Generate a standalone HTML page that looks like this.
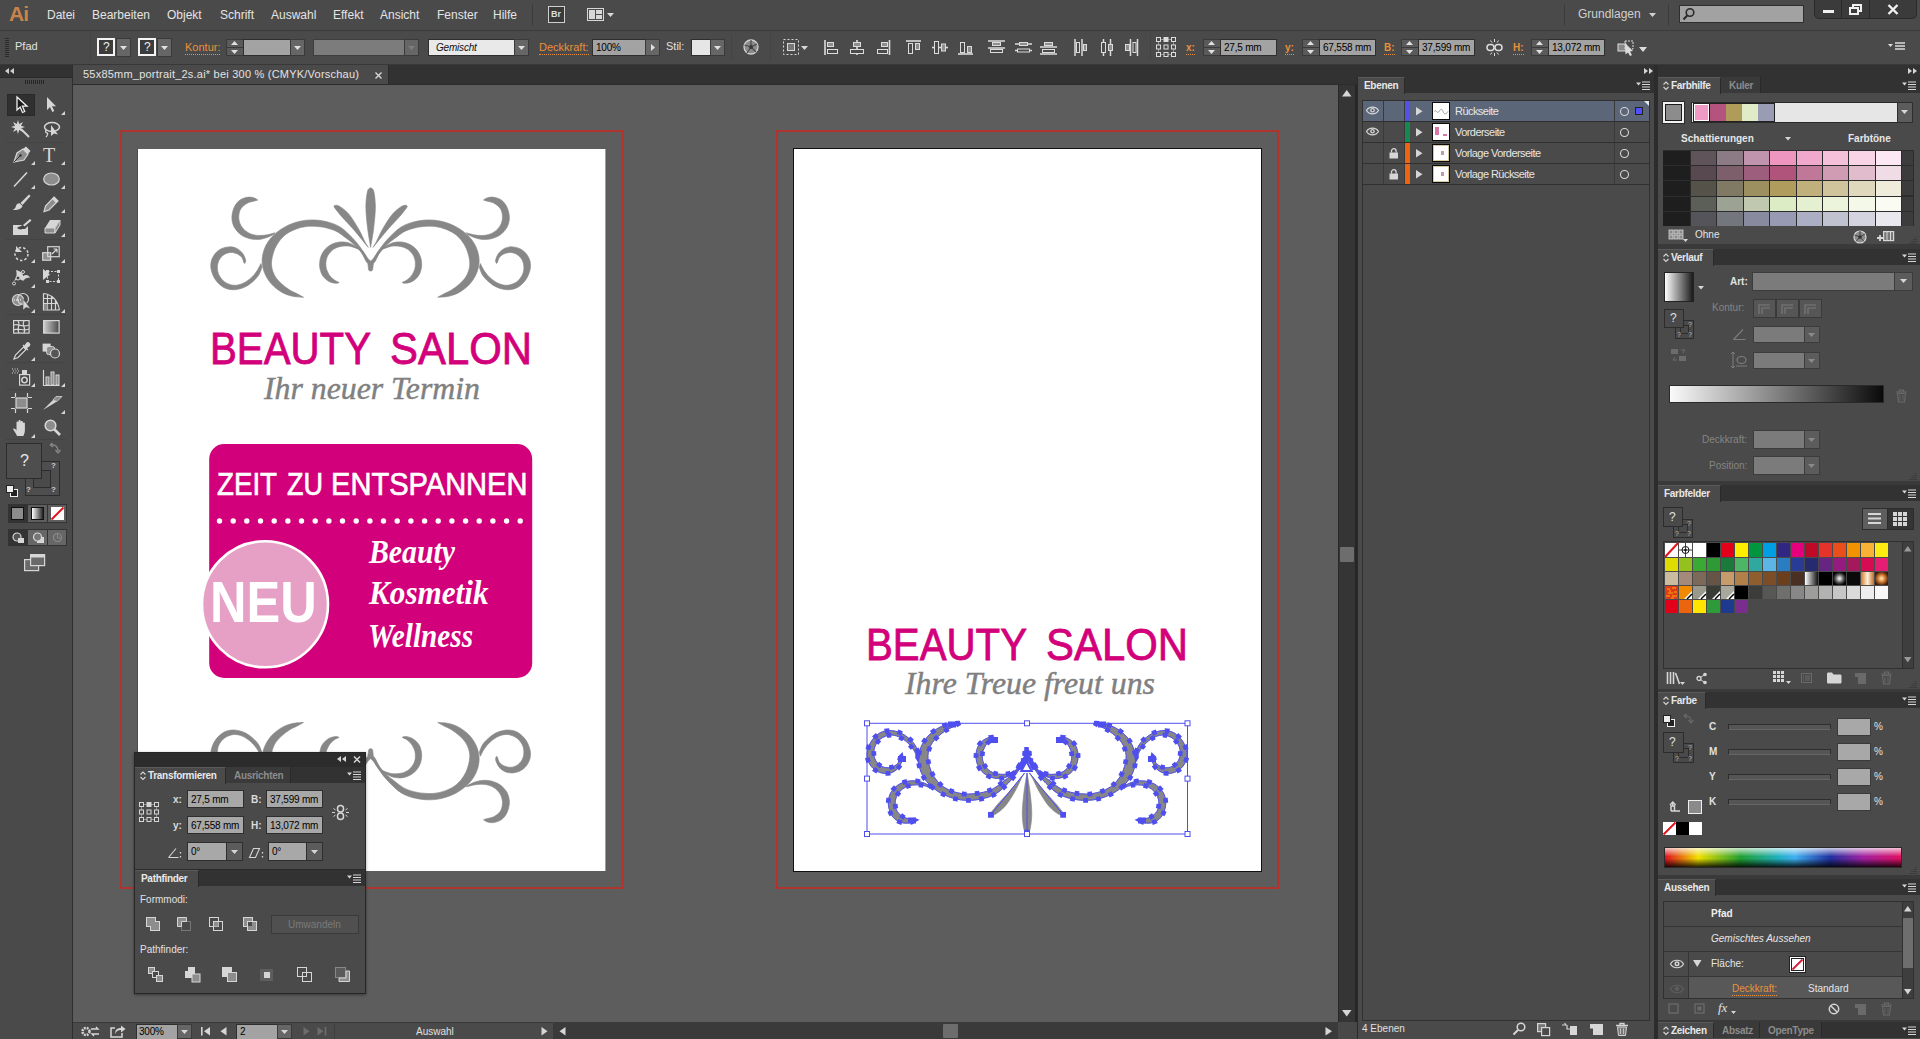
<!DOCTYPE html>
<html lang="de">
<head>
<meta charset="utf-8">
<title>55x85mm_portrait_2s.ai</title>
<style>
*{box-sizing:border-box;margin:0;padding:0}
html,body{width:1920px;height:1039px;overflow:hidden;background:#4a4a4a;}
body{position:relative;font-family:"Liberation Sans","DejaVu Sans",sans-serif;font-size:11px;color:#e6e6e6;line-height:1}
.a{position:absolute}
.t{position:absolute;white-space:nowrap;line-height:1}
svg{position:absolute;overflow:visible}
/* ---------- top bars ---------- */
#menubar{left:0;top:0;width:1920px;height:30px;background:#4a4a4a}
#ctrlbar{left:0;top:30px;width:1920px;height:35px;background:#4a4a4a;border-top:1px solid #3b3b3b;border-bottom:1px solid #383838}
#menubar .m{top:9px;font-size:12px;color:#e4e4e4}
.orange{color:#e8903a}
.dotted{border-bottom:1px dotted #e8903a;padding-bottom:1px}
.field{position:absolute;background:#a9a9a9;border:1px solid #2e2e2e;color:#000;font-size:10px;letter-spacing:-0.2px;padding:3px 0 0 3px;height:16px;white-space:nowrap;overflow:hidden}
.fielddk{position:absolute;background:#7b7b7b;border:1px solid #3a3a3a;height:16px}
.btn{position:absolute;background:#666;border:1px solid #3a3a3a}
/* ---------- canvas ---------- */
#tabbar{left:73px;top:65px;width:1284px;height:20px;background:#323232}
#tab{left:0;top:0;width:316px;height:20px;background:#4a4a4a;border-right:1px solid #2c2c2c}
#canvas{left:73px;top:85px;width:1265px;height:937px;background:#5d5d5d;overflow:hidden}
#vscroll{left:1338px;top:85px;width:19px;height:937px;background:#353535;border-left:1px solid #282828;border-right:2px solid #262626}
#status{left:73px;top:1022px;width:1284px;height:17px;background:#484848}
/* ---------- tools ---------- */
#tools{left:0;top:65px;width:72px;height:974px;background:#4a4a4a}
#toolshead{left:0;top:65px;width:72px;height:12px;background:#323232}
/* ---------- panels ---------- */
.dockhead{background:#373737}
.ptabbar{background:#3a3a3a}
.ptab{position:absolute;background:#4a4a4a;font-weight:bold;font-size:10px;color:#e8e8e8}
.ptab2{position:absolute;font-weight:bold;font-size:10px;color:#8f8f8f}
.panel{background:#4a4a4a}
</style>
</head>
<body>
<!-- ======= MENU BAR ======= -->
<div id="menubar" class="a">
<div class="t" style="left:9px;top:3px;font-size:21px;font-weight:bold;color:#c8834a;letter-spacing:-1px">Ai</div>
<div class="t m" style="left:47px">Datei</div>
<div class="t m" style="left:92px">Bearbeiten</div>
<div class="t m" style="left:167px">Objekt</div>
<div class="t m" style="left:220px">Schrift</div>
<div class="t m" style="left:271px">Auswahl</div>
<div class="t m" style="left:333px">Effekt</div>
<div class="t m" style="left:380px">Ansicht</div>
<div class="t m" style="left:437px">Fenster</div>
<div class="t m" style="left:493px">Hilfe</div>
<div class="a" style="left:532px;top:4px;width:1px;height:22px;background:#3c3c3c"></div>
<div class="a" style="left:548px;top:6px;width:17px;height:17px;border:1px solid #d0d0d0;background:#3a3a3a"></div><div class="t" style="left:551px;top:10px;font-size:9px;font-weight:bold;color:#ddd">Br</div>
<svg style="left:587px;top:8px" width="30" height="14"><rect x="0.5" y="0.5" width="16" height="12" fill="#4a4a4a" stroke="#d8d8d8"/><rect x="2" y="2" width="6" height="9" fill="#d8d8d8"/><rect x="9" y="2" width="6" height="4" fill="#d8d8d8"/><rect x="9" y="7" width="6" height="4" fill="#d8d8d8"/><path d="M20 5h7l-3.5 4z" fill="#d8d8d8"/></svg>
<div class="a" style="left:1564px;top:4px;width:1px;height:22px;background:#3c3c3c"></div>
<div class="t" style="left:1578px;top:8px;font-size:12px;color:#d0d0d0">Grundlagen</div>
<svg style="left:1649px;top:13px" width="8" height="5"><path d="M0 0h7l-3.5 4z" fill="#d0d0d0"/></svg>
<div class="a" style="left:1668px;top:4px;width:1px;height:22px;background:#3c3c3c"></div>
<div class="a" style="left:1679px;top:5px;width:125px;height:18px;background:#a2a2a2;border:1px solid #2e2e2e"></div>
<svg style="left:1682px;top:7px" width="14" height="14"><circle cx="8" cy="5.5" r="3.8" fill="none" stroke="#2a2a2a" stroke-width="1.6"/><path d="M5.2 8.5L1.5 12.5" stroke="#2a2a2a" stroke-width="2"/></svg>
<div class="a" style="left:1814px;top:0;width:103px;height:19px;background:#3b3b3b;border-radius:0 0 5px 5px;border:1px solid #2a2a2a;border-top:none"></div>
<div class="a" style="left:1841px;top:0;width:1px;height:18px;background:#2a2a2a"></div><div class="a" style="left:1869px;top:0;width:1px;height:18px;background:#2a2a2a"></div>
<div class="a" style="left:1823px;top:10px;width:11px;height:3px;background:#f0f0f0"></div>
<svg style="left:1849px;top:4px" width="14" height="12"><rect x="4" y="1" width="8" height="6" fill="none" stroke="#f0f0f0" stroke-width="2"/><rect x="1" y="4" width="8" height="6" fill="#3b3b3b" stroke="#f0f0f0" stroke-width="2"/></svg>
<svg style="left:1887px;top:4px" width="12" height="11"><path d="M1.5 1l9 9M10.5 1l-9 9" stroke="#f0f0f0" stroke-width="2.4"/></svg>
</div>
<!-- ======= CONTROL BAR ======= -->
<div id="ctrlbar" class="a">
<div class="a" style="left:5px;top:7px;width:4px;height:20px;background:repeating-linear-gradient(#2a2a2a 0 1px,transparent 1px 2px)"></div>
<div class="t" style="left:15px;top:10px;font-size:11px;color:#e0e0e0">Pfad</div>
<div class="a" style="left:90px;top:3px;width:1px;height:26px;background:#444"></div>
<div class="a" style="left:97px;top:7px;width:18px;height:18px;border:2px solid #f4f4f4;background:#3c3c3c"></div><div class="t" style="left:103px;top:10px;font-size:12px;color:#eee">?</div><div class="btn" style="left:116px;top:7px;width:15px;height:19px"></div><svg style="left:120px;top:15px" width="8" height="5"><path d="M0 0h7l-3.5 4z" fill="#e0e0e0"/></svg>
<div class="a" style="left:138px;top:7px;width:18px;height:18px;border:2px solid #f4f4f4;background:#3c3c3c"></div><div class="t" style="left:144px;top:10px;font-size:12px;color:#eee">?</div><div class="btn" style="left:157px;top:7px;width:15px;height:19px"></div><svg style="left:161px;top:15px" width="8" height="5"><path d="M0 0h7l-3.5 4z" fill="#e0e0e0"/></svg>
<div class="t orange" style="left:185px;top:11px;font-size:11px"><span class="dotted">Kontur:</span></div>
<div class="btn" style="left:226px;top:8px;width:18px;height:17px;background:#5a5a5a"></div><div class="a" style="left:227px;top:16px;width:16px;height:1px;background:#3a3a3a"></div><svg style="left:231px;top:10px" width="8" height="14"><path d="M0 4h7l-3.5-4z M0 9h7l-3.5 4z" fill="#e0e0e0"/></svg><div class="field" style="left:243px;top:8px;width:48px;height:17px;background:#a3a3a3"></div><div class="btn" style="left:290px;top:8px;width:15px;height:17px"></div><svg style="left:294px;top:15px" width="8" height="5"><path d="M0 0h7l-3.5 4z" fill="#e0e0e0"/></svg>
<div class="field" style="left:313px;top:8px;width:92px;height:17px;background:#7c7c7c;border-color:#3e3e3e"></div><div class="btn" style="left:404px;top:8px;width:15px;height:17px"></div><svg style="left:408px;top:15px" width="8" height="5"><path d="M0 0h7l-3.5 4z" fill="#7d7d7d"/></svg>
<div class="field" style="left:428px;top:8px;width:87px;height:17px;background:#e9e9e9;font-style:italic;color:#111;padding:3px 0 0 7px">Gemischt</div><div class="btn" style="left:514px;top:8px;width:15px;height:17px"></div><svg style="left:518px;top:15px" width="8" height="5"><path d="M0 0h7l-3.5 4z" fill="#e0e0e0"/></svg>
<div class="t orange" style="left:539px;top:11px;font-size:11px"><span class="dotted">Deckkraft:</span></div>
<div class="field" style="left:592px;top:8px;width:54px;height:17px;background:#a3a3a3">100%</div><div class="btn" style="left:645px;top:8px;width:15px;height:17px"></div><svg style="left:651px;top:13px" width="5" height="8"><path d="M0 0v7l4-3.500z" fill="#e0e0e0"/></svg>
<div class="t" style="left:666px;top:10px;font-size:11px;color:#e0e0e0">Stil:</div>
<div class="field" style="left:691px;top:8px;width:20px;height:17px;background:#e6e6e6"></div><div class="btn" style="left:710px;top:8px;width:15px;height:17px"></div><svg style="left:714px;top:15px" width="8" height="5"><path d="M0 0h7l-3.5 4z" fill="#e0e0e0"/></svg>
<div class="a" style="left:731px;top:3px;width:1px;height:26px;background:#444"></div>
<svg style="left:743px;top:8px" width="17" height="17"><circle cx="8" cy="8" r="7" fill="#8a8a8a" stroke="#d0d0d0" stroke-width="1.3"/><path d="M8 8L8 1M8 8L14 5M8 8L13 13M8 8L4 14M8 8L1.500 6" stroke="#4a4a4a" stroke-width="1.2"/><circle cx="8" cy="8" r="2" fill="#3a3a3a"/></svg>
<div class="a" style="left:770px;top:3px;width:1px;height:26px;background:#444"></div>
<svg style="left:782px;top:7px" width="28" height="20"><rect x="1.5" y="1.5" width="15" height="15" fill="none" stroke="#d8d8d8" stroke-dasharray="2 2"/><rect x="5.500" y="5.500" width="7" height="7" fill="#777" stroke="#d8d8d8"/><path d="M19 8h7l-3.500 4z" fill="#d8d8d8"/></svg>
<svg style="left:824px;top:9px" width="15" height="15"><path d="M1 0v15" stroke="#dcdcdc" stroke-width="1.6"/><rect x="3.500" y="2.500" width="6" height="4" fill="#8d8d8d" stroke="#dcdcdc"/><rect x="3.500" y="9.500" width="10" height="4" fill="none" stroke="#dcdcdc"/></svg>
<svg style="left:850px;top:9px" width="15" height="15"><path d="M7 0v15" stroke="#dcdcdc" stroke-width="1.6"/><rect x="3.500" y="2.500" width="7" height="4" fill="#8d8d8d" stroke="#dcdcdc"/><rect x="0.500" y="9.500" width="13" height="4" fill="#4a4a4a" stroke="#dcdcdc"/></svg>
<svg style="left:876px;top:9px" width="15" height="15"><path d="M13.500 0v15" stroke="#dcdcdc" stroke-width="1.600"/><rect x="5.500" y="2.500" width="6" height="4" fill="#8d8d8d" stroke="#dcdcdc"/><rect x="1.500" y="9.500" width="10" height="4" fill="none" stroke="#dcdcdc"/></svg>
<svg style="left:906px;top:9px" width="16" height="15"><path d="M0 1h15" stroke="#dcdcdc" stroke-width="1.600"/><rect x="2.500" y="3.500" width="4" height="10" fill="none" stroke="#dcdcdc"/><rect x="9.500" y="3.500" width="4" height="6" fill="#8d8d8d" stroke="#dcdcdc"/></svg>
<svg style="left:932px;top:9px" width="17" height="15"><path d="M0 7.500h16" stroke="#dcdcdc" stroke-width="1.600"/><rect x="2.500" y="1.500" width="4" height="12" fill="#4a4a4a" stroke="#dcdcdc"/><rect x="9.500" y="4" width="4" height="7" fill="#8d8d8d" stroke="#dcdcdc"/></svg>
<svg style="left:958px;top:9px" width="16" height="16"><path d="M0 14h15" stroke="#dcdcdc" stroke-width="1.600"/><rect x="2.500" y="2.500" width="4" height="10" fill="none" stroke="#dcdcdc"/><rect x="9.500" y="6.500" width="4" height="6" fill="#8d8d8d" stroke="#dcdcdc"/></svg>
<svg style="left:988px;top:9px" width="18" height="15"><path d="M0 1h17M0 8h17" stroke="#dcdcdc" stroke-width="1.500"/><rect x="4.500" y="2.500" width="8" height="3" fill="#8d8d8d" stroke="#dcdcdc"/><rect x="2.500" y="9.500" width="12" height="3" fill="none" stroke="#dcdcdc"/></svg>
<svg style="left:1015px;top:9px" width="18" height="15"><path d="M0 4h17M0 10.500h17" stroke="#dcdcdc" stroke-width="1.500"/><rect x="4.500" y="2.500" width="8" height="3" fill="#8d8d8d" stroke="#dcdcdc"/><rect x="2.500" y="9" width="12" height="3" fill="#4a4a4a" stroke="#dcdcdc"/></svg>
<svg style="left:1040px;top:9px" width="18" height="16"><path d="M0 7h17M0 14h17" stroke="#dcdcdc" stroke-width="1.500"/><rect x="4.500" y="2.500" width="8" height="3" fill="#8d8d8d" stroke="#dcdcdc"/><rect x="2.500" y="9.500" width="12" height="3" fill="none" stroke="#dcdcdc"/></svg>
<svg style="left:1074px;top:8px" width="15" height="17"><path d="M1 0v17M8 0v17" stroke="#dcdcdc" stroke-width="1.500"/><rect x="2.500" y="3.500" width="3" height="10" fill="none" stroke="#dcdcdc"/><rect x="9.500" y="5.500" width="3" height="6" fill="#8d8d8d" stroke="#dcdcdc"/></svg>
<svg style="left:1100px;top:8px" width="15" height="17"><path d="M3.500 0v17M10.500 0v17" stroke="#dcdcdc" stroke-width="1.500"/><rect x="1.500" y="3.500" width="4" height="10" fill="#4a4a4a" stroke="#dcdcdc"/><rect x="8.500" y="5.500" width="4" height="6" fill="#8d8d8d" stroke="#dcdcdc"/></svg>
<svg style="left:1124px;top:8px" width="15" height="17"><path d="M6.500 0v17M13.500 0v17" stroke="#dcdcdc" stroke-width="1.500"/><rect x="9" y="3.500" width="3" height="10" fill="none" stroke="#dcdcdc"/><rect x="1.500" y="5.500" width="4" height="6" fill="#8d8d8d" stroke="#dcdcdc"/></svg>
<div class="a" style="left:1150px;top:3px;width:1px;height:26px;background:#444"></div>
<svg style="left:1156px;top:6px" width="21" height="21"><rect x="2.500" y="2.500" width="15" height="15" fill="none" stroke="#dcdcdc" stroke-dasharray="1 1"/><rect x="0.5" y="0.5" width="4" height="4" fill="#4a4a4a" stroke="#dcdcdc"/><rect x="0.5" y="8.0" width="4" height="4" fill="#4a4a4a" stroke="#dcdcdc"/><rect x="0.5" y="15.5" width="4" height="4" fill="#4a4a4a" stroke="#dcdcdc"/><rect x="8.0" y="0.5" width="4" height="4" fill="#dcdcdc" stroke="#dcdcdc"/><rect x="8.0" y="8.0" width="4" height="4" fill="#4a4a4a" stroke="#dcdcdc"/><rect x="8.0" y="15.5" width="4" height="4" fill="#4a4a4a" stroke="#dcdcdc"/><rect x="15.5" y="0.5" width="4" height="4" fill="#4a4a4a" stroke="#dcdcdc"/><rect x="15.5" y="8.0" width="4" height="4" fill="#4a4a4a" stroke="#dcdcdc"/><rect x="15.5" y="15.5" width="4" height="4" fill="#4a4a4a" stroke="#dcdcdc"/></svg>
<div class="t orange" style="left:1186px;top:12px;font-size:10px;font-weight:bold"><span class="dotted">x:</span></div>
<div class="btn" style="left:1203px;top:8px;width:18px;height:17px;background:#5a5a5a"></div><div class="a" style="left:1204px;top:16px;width:16px;height:1px;background:#3a3a3a"></div><svg style="left:1208px;top:10px" width="8" height="14"><path d="M0 4h7l-3.5-4z M0 9h7l-3.5 4z" fill="#e0e0e0"/></svg><div class="field" style="left:1220px;top:8px;width:57px;height:17px;background:#a3a3a3">27,5 mm</div>
<div class="t orange" style="left:1285px;top:12px;font-size:10px;font-weight:bold"><span class="dotted">y:</span></div>
<div class="btn" style="left:1302px;top:8px;width:18px;height:17px;background:#5a5a5a"></div><div class="a" style="left:1303px;top:16px;width:16px;height:1px;background:#3a3a3a"></div><svg style="left:1307px;top:10px" width="8" height="14"><path d="M0 4h7l-3.5-4z M0 9h7l-3.5 4z" fill="#e0e0e0"/></svg><div class="field" style="left:1319px;top:8px;width:57px;height:17px;background:#a3a3a3">67,558 mm</div>
<div class="t orange" style="left:1384px;top:12px;font-size:10px;font-weight:bold"><span class="dotted">B:</span></div>
<div class="btn" style="left:1401px;top:8px;width:18px;height:17px;background:#5a5a5a"></div><div class="a" style="left:1402px;top:16px;width:16px;height:1px;background:#3a3a3a"></div><svg style="left:1406px;top:10px" width="8" height="14"><path d="M0 4h7l-3.5-4z M0 9h7l-3.5 4z" fill="#e0e0e0"/></svg><div class="field" style="left:1418px;top:8px;width:57px;height:17px;background:#a3a3a3">37,599 mm</div>
<svg style="left:1486px;top:8px" width="17" height="17"><rect x="1" y="5.500" width="7" height="6" rx="3" fill="none" stroke="#dcdcdc" stroke-width="1.500"/><rect x="9" y="5.500" width="7" height="6" rx="3" fill="none" stroke="#dcdcdc" stroke-width="1.500"/><path d="M8.500 0v3M8.500 14v3M4.500 1.500l1.500 2M12.500 1.500l-1.500 2M4.500 15.500l1.500-2M12.500 15.500l-1.500-2" stroke="#dcdcdc"/></svg>
<div class="t orange" style="left:1513px;top:12px;font-size:10px;font-weight:bold"><span class="dotted">H:</span></div>
<div class="btn" style="left:1531px;top:8px;width:18px;height:17px;background:#5a5a5a"></div><div class="a" style="left:1532px;top:16px;width:16px;height:1px;background:#3a3a3a"></div><svg style="left:1536px;top:10px" width="8" height="14"><path d="M0 4h7l-3.5-4z M0 9h7l-3.5 4z" fill="#e0e0e0"/></svg><div class="field" style="left:1548px;top:8px;width:57px;height:17px;background:#a3a3a3">13,072 mm</div>
<svg style="left:1617px;top:9px" width="32" height="16"><rect x="1" y="4" width="8" height="7" fill="#888" stroke="#dcdcdc"/><rect x="8" y="1" width="8" height="8" fill="none" stroke="#dcdcdc" stroke-dasharray="2 1"/><path d="M8 3l8 8-3 .5 2 3.500-2 1-2-3.500-2.500 2z" fill="#dcdcdc"/><path d="M22 7h8l-4 5z" fill="#dcdcdc"/></svg>
<svg style="left:1888px;top:11px" width="18" height="10"><path d="M0 2h5l-2.500 3z" fill="#dcdcdc"/><path d="M7 1h10M7 4h10M7 7h10" stroke="#dcdcdc" stroke-width="1.300"/></svg>
</div>
<!-- ======= TOOLS ======= -->
<div id="tools" class="a"></div>
<div id="toolshead" class="a"></div>
<!--TOOLS-->
<svg style="left:5px;top:68px" width="10" height="7"><path d="M4 0v6L0 3zM9 0v6L5 3z" fill="#d0d0d0"/></svg>
<div class="a" style="left:0;top:77px;width:72px;height:1px;background:#2a2a2a"></div><div class="a" style="left:72px;top:65px;width:1px;height:974px;background:#2e2e2e"></div><div class="a" style="left:25px;top:80px;width:20px;height:4px;background:repeating-linear-gradient(90deg,#262626 0 1px,transparent 1px 2px)"></div>
<div class="a" style="left:7px;top:94px;width:28px;height:22px;background:#303030;border:1px solid #2a2a2a"></div>
<svg style="left:16px;top:96px" width="13" height="18"><path d="M1 1v13l3.200-3 2.300 5.500 2.200-1-2.300-5.300H11z" fill="#1a1a1a" stroke="#f0f0f0" stroke-width="1.300"/></svg>
<svg style="left:46px;top:97px" width="12" height="16"><path d="M1 0v13l3-3 2.300 5 2-1-2.300-4.800H10z" fill="#d6d6d6"/></svg>
<svg style="left:61px;top:111px" width="4" height="4"><path d="M4 0v4H0z" fill="#d6d6d6"/></svg><svg style="left:12px;top:120px" width="18" height="18"><path d="M9 9l8 8" stroke="#d6d6d6" stroke-width="2"/><path d="M6 0l1.200 4 3.800-2-2 3.800 4 1.200-4 1.200 2 3.800-3.800-2L6 14 4.800 10 1 12l2-3.800L-1 7l4-1.200L1 2l3.800 2z" fill="#d6d6d6"/></svg>
<svg style="left:43px;top:121px" width="18" height="17"><ellipse cx="9" cy="6" rx="7.500" ry="4.500" fill="none" stroke="#d6d6d6" stroke-width="1.500"/><path d="M3 9c-1 2 0 3 1 3s1 2-1 4" fill="none" stroke="#d6d6d6" stroke-width="1.300"/><path d="M8 4v11l3-2.500 4 1z" fill="#d6d6d6"/></svg>
<div class="a" style="left:6px;top:142px;width:60px;height:1px;background:#444"></div>
<svg style="left:13px;top:146px" width="18" height="17"><path d="M1 16L4 7l6-4 5 5-4 6z" fill="#8d8d8d" stroke="#d6d6d6" stroke-width="1.200"/><path d="M10 3l3-2.500 4.500 4.500L15 8z" fill="#d6d6d6"/><path d="M1 16l6-6" stroke="#333" stroke-width="1"/><circle cx="7.500" cy="9.500" r="1.300" fill="#333"/></svg>
<svg style="left:31px;top:161px" width="4" height="4"><path d="M4 0v4H0z" fill="#d6d6d6"/></svg><div class="t" style="left:43px;top:145px;font-family:'Liberation Serif',serif;font-size:20px;color:#d6d6d6">T</div><svg style="left:61px;top:161px" width="4" height="4"><path d="M4 0v4H0z" fill="#d6d6d6"/></svg><svg style="left:14px;top:172px" width="14" height="15"><path d="M0 14.500L13 0.500" stroke="#d6d6d6" stroke-width="1.500"/></svg>
<svg style="left:31px;top:185px" width="4" height="4"><path d="M4 0v4H0z" fill="#d6d6d6"/></svg><svg style="left:43px;top:172px" width="17" height="14"><ellipse cx="8.500" cy="7" rx="7.800" ry="6" fill="#8d8d8d" stroke="#d6d6d6" stroke-width="1.200"/></svg>
<svg style="left:61px;top:185px" width="4" height="4"><path d="M4 0v4H0z" fill="#d6d6d6"/></svg><svg style="left:12px;top:194px" width="19" height="17"><path d="M17 0.500l1.500 1.500-8 9-2-2z" fill="#d6d6d6"/><path d="M8 9.500l2.500 2.500c-1 3-5 4.500-10 4 2-1 3-2 3.500-4 .5-2 2.500-3 4-2.500z" fill="#d6d6d6"/></svg>
<svg style="left:43px;top:196px" width="16" height="16"><path d="M11 1l4 4-9 9-5 1.500L2.500 10z" fill="#8d8d8d" stroke="#d6d6d6" stroke-width="1.200"/><path d="M11 1l4 4-2 2-4-4z" fill="#d6d6d6"/></svg>
<svg style="left:61px;top:209px" width="4" height="4"><path d="M4 0v4H0z" fill="#d6d6d6"/></svg><svg style="left:13px;top:219px" width="19" height="17"><path d="M0 6h9l-3 4h6l3-3v9H0z" fill="#d6d6d6"/><path d="M17 0l1.500 1.500-7 6-1.500-1.500z" fill="#d6d6d6"/><path d="M4 9c2-2 6-3 8-1-2 3-6 3-8 1z" fill="#444"/></svg>
<svg style="left:44px;top:219px" width="17" height="15"><path d="M6 1h10l-5 8H1z" fill="#d6d6d6"/><path d="M1 9h10v5H1z" fill="#8d8d8d" stroke="#d6d6d6" stroke-width="1"/><path d="M11 9l5-8v5l-5 8z" fill="#8d8d8d" stroke="#d6d6d6" stroke-width="1"/></svg>
<svg style="left:61px;top:233px" width="4" height="4"><path d="M4 0v4H0z" fill="#d6d6d6"/></svg><div class="a" style="left:6px;top:239px;width:60px;height:1px;background:#444"></div>
<svg style="left:13px;top:245px" width="17" height="17"><circle cx="8.500" cy="9" r="6.500" fill="none" stroke="#d6d6d6" stroke-width="1.500" stroke-dasharray="2.500 2"/><path d="M3 1v6h6z" fill="#d6d6d6"/></svg>
<svg style="left:31px;top:259px" width="4" height="4"><path d="M4 0v4H0z" fill="#d6d6d6"/></svg><svg style="left:42px;top:246px" width="18" height="15"><rect x="0.700" y="6.700" width="8" height="7.500" fill="#8d8d8d" stroke="#d6d6d6" stroke-width="1.200"/><rect x="5.700" y="0.700" width="11.500" height="10" fill="none" stroke="#d6d6d6" stroke-width="1.200"/><path d="M10 8l5-5M15 3h-3.500M15 3v3.500" stroke="#d6d6d6" stroke-width="1.200" fill="none"/></svg>
<svg style="left:61px;top:259px" width="4" height="4"><path d="M4 0v4H0z" fill="#d6d6d6"/></svg><svg style="left:12px;top:269px" width="19" height="17"><path d="M4 1c1 4 1 7-2 11 4-2 7-2 9 0 2-3 5-4 7-3-1-3-4-4-7-2 0-3-3-5-7-6z" fill="#d6d6d6"/><circle cx="6" cy="9" r="2" fill="#444" stroke="#d6d6d6"/><circle cx="2" cy="14.500" r="1.500" fill="#444" stroke="#d6d6d6"/><circle cx="11" cy="3" r="1.500" fill="#444" stroke="#d6d6d6"/></svg>
<svg style="left:31px;top:284px" width="4" height="4"><path d="M4 0v4H0z" fill="#d6d6d6"/></svg><svg style="left:43px;top:269px" width="17" height="15"><rect x="4.500" y="2.500" width="11" height="10" fill="none" stroke="#d6d6d6" stroke-dasharray="2 1.500"/><path d="M0 0v11l7-5.500z" fill="#d6d6d6"/><rect x="3" y="1" width="3" height="3" fill="#d6d6d6"/><rect x="14" y="1" width="3" height="3" fill="#d6d6d6"/><rect x="3" y="11" width="3" height="3" fill="#d6d6d6"/><rect x="14" y="11" width="3" height="3" fill="#d6d6d6"/></svg>
<svg style="left:12px;top:293px" width="20" height="19"><circle cx="6" cy="7" r="5.500" fill="#8d8d8d" stroke="#d6d6d6" stroke-width="1.200"/><circle cx="11" cy="6" r="5.500" fill="none" stroke="#d6d6d6" stroke-width="1.200"/><path d="M2 7h8" stroke="#fff" stroke-dasharray="1 1"/><path d="M11 6v11l3-2.500 4.500 1z" fill="#d6d6d6" stroke="#444" stroke-width=".5"/></svg>
<svg style="left:31px;top:309px" width="4" height="4"><path d="M4 0v4H0z" fill="#d6d6d6"/></svg><svg style="left:43px;top:293px" width="17" height="18"><path d="M0.500 0.500v16.500h16M0.500 0.500c9 1 14 6 16 16.500M4.500 1.500v15.500M8.500 3.500v13.500M12.500 7v10M0.500 5.500h10M0.500 10.500h14" fill="none" stroke="#d6d6d6" stroke-width="1.200"/><path d="M1 11h3.500v5.500H1z" fill="#8d8d8d"/></svg>
<svg style="left:61px;top:309px" width="4" height="4"><path d="M4 0v4H0z" fill="#d6d6d6"/></svg><div class="a" style="left:6px;top:314px;width:60px;height:1px;background:#444"></div>
<svg style="left:13px;top:320px" width="17" height="14"><rect x="0.600" y="0.600" width="15.500" height="12.500" fill="none" stroke="#d6d6d6" stroke-width="1.200"/><path d="M1 5c4-2 7 3 15 0M1 10c5-3 8 2 15-1M5 1c3 4-2 8 1 12M11 1c-3 5 3 7 0 12" fill="none" stroke="#d6d6d6" stroke-width="1.200"/></svg>
<svg style="left:43px;top:320px" width="17" height="14"><defs><linearGradient id="tg"><stop offset="0" stop-color="#cfcfcf"/><stop offset="1" stop-color="#4a4a4a"/></linearGradient></defs><rect x="0.600" y="0.600" width="15.500" height="12.500" fill="url(#tg)" stroke="#d6d6d6" stroke-width="1.200"/></svg>
<svg style="left:13px;top:342px" width="18" height="18"><path d="M1 17l1.500-4 8-8 2.500 2.500-8 8z" fill="#444" stroke="#d6d6d6" stroke-width="1.200"/><path d="M10 3l5 5M11 5l3-4c1.500-1 3.500 1 2.500 2.500l-4 3z" fill="#d6d6d6" stroke="#d6d6d6" stroke-width="1.200"/></svg>
<svg style="left:31px;top:357px" width="4" height="4"><path d="M4 0v4H0z" fill="#d6d6d6"/></svg><svg style="left:42px;top:343px" width="19" height="16"><rect x="0.600" y="0.600" width="8" height="8" fill="#d6d6d6"/><rect x="4.600" y="3.600" width="8" height="8" rx="2" fill="#8d8d8d" stroke="#d6d6d6" stroke-width="1"/><circle cx="13" cy="10.500" r="4.500" fill="#555" stroke="#d6d6d6" stroke-width="1.200"/></svg>
<div class="a" style="left:6px;top:362px;width:60px;height:1px;background:#444"></div>
<svg style="left:12px;top:368px" width="19" height="18"><rect x="7.600" y="6.600" width="10" height="10.500" fill="#444" stroke="#d6d6d6" stroke-width="1.200"/><rect x="10" y="2" width="5" height="4" fill="#d6d6d6"/><circle cx="12.500" cy="12" r="2.700" fill="none" stroke="#d6d6d6" stroke-width="1.500"/><path d="M0 1h1M2.500 1h1M5 1h1M1 3h1M3.500 3h1M6 3h1M0 5h1M2.500 5h1M5 5h1" stroke="#d6d6d6" stroke-width="1.200"/></svg>
<svg style="left:31px;top:383px" width="4" height="4"><path d="M4 0v4H0z" fill="#d6d6d6"/></svg><svg style="left:43px;top:370px" width="17" height="16"><path d="M0.500 0v15.500h16" fill="none" stroke="#d6d6d6" stroke-width="1.200"/><rect x="3" y="7" width="3" height="8" fill="#8d8d8d" stroke="#d6d6d6"/><rect x="8" y="2" width="3" height="13" fill="#8d8d8d" stroke="#d6d6d6"/><rect x="13" y="5" width="3" height="10" fill="#8d8d8d" stroke="#d6d6d6"/></svg>
<svg style="left:61px;top:383px" width="4" height="4"><path d="M4 0v4H0z" fill="#d6d6d6"/></svg><div class="a" style="left:6px;top:389px;width:60px;height:1px;background:#444"></div>
<svg style="left:11px;top:393px" width="21" height="20"><rect x="5" y="5" width="11" height="10" fill="#8d8d8d" stroke="#d6d6d6" stroke-width="1.200"/><path d="M4.500 0v4M16.500 0v4M4.500 16v4M16.500 16v4M0 4.500h4M0 15.500h4M17 4.500h4M17 15.500h4" stroke="#d6d6d6" stroke-width="1.200"/></svg>
<svg style="left:43px;top:396px" width="19" height="15"><path d="M0 14L10 4l4 1.500z" fill="#d6d6d6"/><path d="M10 4l3-3.500h6L14 5.500z" fill="#8d8d8d" stroke="#d6d6d6" stroke-width=".8"/></svg>
<svg style="left:61px;top:410px" width="4" height="4"><path d="M4 0v4H0z" fill="#d6d6d6"/></svg><svg style="left:13px;top:419px" width="18" height="18"><path d="M4 17c-1-3-3-5-4-7 1-1 2.500 0 3.500 1.500V3.500c0-1.500 2-1.500 2 0V2c0-1.500 2.200-1.500 2.200 0v1c0-1.500 2.200-1.500 2.200 0v1.500c0-1.300 2-1.300 2 0V11c0 3-1 4-1.500 6z" fill="#d6d6d6"/></svg>
<svg style="left:31px;top:434px" width="4" height="4"><path d="M4 0v4H0z" fill="#d6d6d6"/></svg><svg style="left:44px;top:419px" width="17" height="17"><circle cx="6.500" cy="6.500" r="5.300" fill="#8d8d8d" stroke="#d6d6d6" stroke-width="1.600"/><path d="M10.500 10.500l5.500 5.500" stroke="#d6d6d6" stroke-width="2.600"/></svg>
<div class="a" style="left:6px;top:439px;width:60px;height:1px;background:#444"></div>
<div class="a" style="left:25px;top:461px;width:35px;height:35px;background:#4e4e4e;border:1px solid #2c2c2c"></div><div class="a" style="left:33px;top:470px;width:18px;height:18px;background:#4a4a4a;border:1px solid #2c2c2c"></div><div class="a" style="left:6px;top:443px;width:36px;height:36px;background:#4e4e4e;border:1px solid #2c2c2c"></div><div class="t" style="left:20px;top:453px;font-size:16px;color:#e8e8e8">?</div><div class="t" style="left:51px;top:462px;font-size:8px;font-weight:bold;color:#ccc">?</div><div class="t" style="left:26px;top:486px;font-size:8px;font-weight:bold;color:#ccc">?</div><div class="t" style="left:51px;top:486px;font-size:8px;font-weight:bold;color:#ccc">?</div><svg style="left:49px;top:444px" width="12" height="10"><path d="M1 1c4-1 8 1 8 6M9 9l-2.500-3M9 9l2.500-3M1 1l3 2M1 1l2.500-2" fill="none" stroke="#888" stroke-width="1.300"/></svg>
<svg style="left:6px;top:485px" width="13" height="13"><rect x="4.500" y="4.500" width="7" height="7" fill="#222" stroke="#eee"/><rect x="0.500" y="0.500" width="7" height="7" fill="#eee" stroke="#222"/></svg>
<div class="a" style="left:8px;top:504px;width:59px;height:19px;background:#5e5e5e;border:1px solid #333"></div><div class="a" style="left:8px;top:504px;width:20px;height:19px;background:#333"></div><div class="a" style="left:27px;top:505px;width:1px;height:17px;background:#333"></div><div class="a" style="left:47px;top:505px;width:1px;height:17px;background:#333"></div><div class="a" style="left:11px;top:507px;width:13px;height:13px;background:#8c8c8c;border:1px solid #111"></div><div class="a" style="left:31px;top:507px;width:13px;height:13px;background:linear-gradient(90deg,#fff,#222);border:1px solid #111"></div><svg style="left:51px;top:507px" width="13" height="13"><rect x="0" y="0" width="13" height="13" fill="#fff"/><path d="M0.500 12.500L12.500 0.500" stroke="#e0141e" stroke-width="2"/></svg>
<div class="a" style="left:8px;top:529px;width:59px;height:17px;background:#666;border:1px solid #333"></div><div class="a" style="left:8px;top:529px;width:20px;height:17px;background:#333"></div><div class="a" style="left:27px;top:530px;width:1px;height:15px;background:#333"></div><div class="a" style="left:47px;top:530px;width:1px;height:15px;background:#333"></div><svg style="left:12px;top:532px" width="13" height="12"><circle cx="5" cy="5" r="4" fill="#555" stroke="#d6d6d6" stroke-width="1.200"/><rect x="6" y="6" width="6" height="5" fill="#d6d6d6"/></svg>
<svg style="left:32px;top:532px" width="13" height="12"><rect x="5" y="5" width="7" height="6" fill="#d6d6d6"/><circle cx="5.500" cy="5" r="4" fill="#777" stroke="#d6d6d6" stroke-width="1.200"/></svg>
<svg style="left:52px;top:532px" width="12" height="12"><circle cx="5.500" cy="5.500" r="4" fill="none" stroke="#8a8a8a" stroke-width="1.200"/><path d="M5.500 2v4h3" stroke="#8a8a8a" fill="none"/></svg>
<svg style="left:24px;top:554px" width="22" height="18"><rect x="0.600" y="5.600" width="14" height="11" fill="#6a6a6a" stroke="#d6d6d6" stroke-width="1.200"/><rect x="6.600" y="0.600" width="14" height="11" fill="#6a6a6a" stroke="#d6d6d6" stroke-width="1.200"/><rect x="7" y="1" width="13.500" height="2.500" fill="#d6d6d6"/></svg>
<!--/TOOLS-->
<!-- ======= DOCUMENT ======= -->
<div id="tabbar" class="a"><div id="tab" class="a"></div></div>
<div id="canvas" class="a">
<!--CANVAS-->
<svg style="left:0;top:0" width="1265" height="937" viewBox="73 85 1265 937">
<defs>
<g id="oh"><path d="M462 160C457 157 444 146 430 142C416 138 398 135 380 138C362 141 338 147 320 160C302 173 286 192 275 215C264 238 255 272 255 300C255 328 262 357 275 380C288 403 309 425 330 440C351 455 377 464 400 470C423 476 448 476 470 475C492 474 510 469 530 462C550 455 580 440 590 435L600 422C590 425 560 434 540 438C520 442 500 444 480 444C460 444 439 442 420 436C401 430 383 422 368 410C353 398 338 383 328 365C318 347 310 322 310 300C310 278 314 251 325 232C336 213 358 197 375 187C392 177 416 174 430 170C444 166 457 162 462 160Z"/><path d="M828 938C813 937 770 937 740 930C710 923 678 912 650 895C622 878 592 856 570 830C548 804 527 772 515 740C503 708 496 673 497 640C498 607 506 572 520 540C534 508 553 478 580 450C607 422 643 395 680 375C717 355 760 339 800 330C840 321 881 318 920 320C959 322 1001 330 1034 339C1067 348 1094 360 1120 375C1146 390 1168 413 1188 431C1208 449 1225 468 1240 485C1255 502 1268 518 1280 535C1292 552 1304 569 1315 585C1326 601 1337 620 1345 630C1353 640 1362 645 1365 648L1365 728C1362 727 1354 729 1350 720C1346 711 1347 687 1343 672C1339 657 1334 647 1325 632C1316 617 1304 598 1290 580C1276 562 1260 541 1240 522C1220 503 1196 486 1173 468C1150 450 1126 429 1100 415C1074 401 1046 392 1019 385C992 378 968 374 940 372C912 370 880 368 850 372C820 376 788 384 760 395C732 406 703 421 680 440C657 459 636 485 620 510C604 535 593 562 585 590C577 618 570 651 572 680C574 709 584 739 597 764C610 789 630 809 650 828C670 847 696 866 718 880C740 894 767 904 785 914C803 924 821 934 828 938Z"/><path d="M495 700C491 710 482 741 470 760C458 779 440 798 420 815C400 832 375 850 350 860C325 870 297 878 270 878C243 878 214 873 190 860C166 847 142 823 125 800C108 777 96 745 90 720C84 695 85 672 90 650C95 628 107 607 120 590C133 573 152 559 170 550C188 541 210 536 230 535C250 534 272 537 290 545C308 553 328 569 340 585C352 601 362 626 365 640C368 654 359 663 358 668L350 660C348 653 343 631 335 620C327 609 315 599 300 592C285 585 263 579 245 580C227 581 207 587 192 597C177 607 162 623 153 640C144 657 139 680 139 700C139 720 143 743 153 762C163 781 178 802 197 815C216 828 246 840 270 842C294 844 317 838 340 828C363 818 389 800 408 783C427 766 442 747 455 728C468 709 482 678 488 668Z"/><path d="M1335 628C1330 619 1314 586 1304 572C1293 558 1283 554 1272 546C1261 538 1250 531 1239 525C1228 519 1217 513 1206 509C1194 504 1183 500 1171 498C1159 496 1146 495 1134 495C1122 495 1109 496 1098 499C1086 501 1074 505 1063 510C1051 515 1041 521 1031 528C1021 535 1011 543 1003 552C995 561 987 571 981 582C975 592 970 604 966 615C962 627 960 639 958 652C957 664 956 676 957 689C958 701 960 713 964 725C967 737 971 750 978 760C984 771 993 781 1002 789C1011 798 1021 805 1032 811C1042 816 1054 821 1066 823C1077 826 1095 825 1101 825L1113 819C1108 816 1093 811 1085 806C1076 801 1068 795 1060 788C1053 782 1046 775 1040 767C1034 760 1029 752 1025 743C1021 735 1017 727 1014 719C1011 710 1009 701 1008 692C1007 683 1007 674 1007 666C1007 657 1008 648 1010 639C1012 630 1015 622 1018 614C1022 605 1027 598 1032 590C1037 583 1043 576 1050 570C1056 563 1064 557 1071 552C1079 547 1088 543 1097 539C1105 536 1115 534 1124 532C1134 530 1144 528 1154 528C1164 527 1175 527 1186 528C1196 529 1207 531 1219 535C1230 538 1241 542 1252 547C1264 553 1275 552 1287 567C1298 583 1315 625 1323 640C1331 655 1333 657 1335 660Z"/></g>
<path id="ol" d="M1076 204C1082 205 1092 197 1111 208C1130 219 1162 240 1188 270C1214 300 1243 348 1265 385C1287 422 1306 467 1319 493C1332 519 1342 531 1346 539L1346 539C1338 529 1317 503 1296 477C1275 451 1246 416 1219 385C1192 354 1156 319 1134 293C1112 267 1094 244 1084 231C1074 218 1073 216 1072 212C1071 208 1075 205 1076 204Z"/>
<path id="oc" d="M1365 62C1361 67 1346 64 1340 90C1334 116 1327 168 1327 216C1327 264 1334 326 1340 380C1346 434 1361 512 1365 539L1365 539C1369 512 1384 434 1390 380C1396 326 1403 264 1403 216C1403 168 1396 116 1390 90C1384 64 1369 67 1365 62Z"/>
<g id="ornN"><use href="#oh"/><use href="#oh" transform="translate(2730,0) scale(-1,1)"/></g>
<g id="ornL"><use href="#ornN"/><use href="#ol"/><use href="#ol" transform="translate(2730,0) scale(-1,1)"/><use href="#oc"/></g>
</defs>
<rect x="121" y="131" width="501.600" height="757" fill="none" stroke="#b8302c" stroke-width="1.800"/>
<rect x="776.700" y="131" width="501.600" height="757" fill="none" stroke="#b8302c" stroke-width="1.800"/>
<rect x="138" y="149" width="467.400" height="722" fill="#fff"/><path d="M137.500 149v722" stroke="#4c4c4c" stroke-width="1"/>
<rect x="793.500" y="148.500" width="468" height="723" fill="#fff" stroke="#111" stroke-width="1"/>
<use href="#ornL" transform="translate(200,180) scale(0.125)" fill="#878787" stroke="#878787" stroke-width="5"/>
<use href="#ornN" transform="translate(200,839.750) scale(0.125,-0.125)" fill="#878787" stroke="#878787" stroke-width="5"/>
<rect x="209.200" y="444" width="323" height="234" rx="15" fill="#d2007a"/>
<g fill="#fff"><circle cx="219.5" cy="521" r="2.700"/><circle cx="233.2" cy="521" r="2.700"/><circle cx="246.8" cy="521" r="2.700"/><circle cx="260.5" cy="521" r="2.700"/><circle cx="274.2" cy="521" r="2.700"/><circle cx="287.9" cy="521" r="2.700"/><circle cx="301.5" cy="521" r="2.700"/><circle cx="315.2" cy="521" r="2.700"/><circle cx="328.9" cy="521" r="2.700"/><circle cx="342.5" cy="521" r="2.700"/><circle cx="356.2" cy="521" r="2.700"/><circle cx="369.9" cy="521" r="2.700"/><circle cx="383.5" cy="521" r="2.700"/><circle cx="397.2" cy="521" r="2.700"/><circle cx="410.9" cy="521" r="2.700"/><circle cx="424.6" cy="521" r="2.700"/><circle cx="438.2" cy="521" r="2.700"/><circle cx="451.9" cy="521" r="2.700"/><circle cx="465.6" cy="521" r="2.700"/><circle cx="479.2" cy="521" r="2.700"/><circle cx="492.9" cy="521" r="2.700"/><circle cx="506.6" cy="521" r="2.700"/><circle cx="520.2" cy="521" r="2.700"/></g>
<circle cx="265" cy="604.300" r="63" fill="#e7a0c5" stroke="#fff" stroke-width="2.600"/>
<use href="#ornL" transform="translate(856.400,840.300) scale(0.125,-0.125)" fill="#878787" stroke="#878787" stroke-width="5"/>
<use href="#ornN" transform="translate(856.400,840.300) scale(0.125,-0.125)" fill="none" stroke="#4f4ff0" stroke-width="8"/>
<use href="#ornN" transform="translate(856.400,840.300) scale(0.125,-0.125)" fill="none" stroke="#4f4ff0" stroke-width="38" stroke-dasharray="38 66"/>
<g transform="translate(856.400,840.300) scale(0.125,-0.125)" stroke="#4f4ff0" stroke-width="8" fill="#4f4ff0"><path d="M1365 539V62M1346 539L1076 204M1384 539L1654 204" fill="none"/><rect x="1346" y="43" width="38" height="38"/><rect x="1057" y="185" width="38" height="38"/><rect x="1635" y="185" width="38" height="38"/></g>
<path d="M1026.500 747v16" stroke="#4f4ff0" stroke-width="4.500"/><path d="M1026.500 761.500l5.200 9.500h-10.400z" fill="#fff" stroke="#4f4ff0" stroke-width="2"/>
<rect x="898" y="756" width="8" height="6" fill="#4f4ff0"/><rect x="908" y="817.5" width="8" height="6" fill="#4f4ff0"/><rect x="1148" y="756" width="8" height="6" fill="#4f4ff0"/><rect x="1138" y="817.5" width="8" height="6" fill="#4f4ff0"/><rect x="948" y="721.5" width="8" height="6" fill="#4f4ff0"/><rect x="1098" y="721.5" width="8" height="6" fill="#4f4ff0"/><rect x="990" y="737" width="8" height="6" fill="#4f4ff0"/><rect x="1056" y="737" width="8" height="6" fill="#4f4ff0"/><rect x="867" y="723.300" width="320.500" height="110.700" fill="none" stroke="#4f4ff0" stroke-width="1"/>
<rect x="864.5" y="720.8" width="5" height="5" fill="#fff" stroke="#4f4ff0" stroke-width="1"/><rect x="1024.5" y="720.8" width="5" height="5" fill="#fff" stroke="#4f4ff0" stroke-width="1"/><rect x="1185.0" y="720.8" width="5" height="5" fill="#fff" stroke="#4f4ff0" stroke-width="1"/><rect x="864.5" y="776.1" width="5" height="5" fill="#fff" stroke="#4f4ff0" stroke-width="1"/><rect x="1185.0" y="776.1" width="5" height="5" fill="#fff" stroke="#4f4ff0" stroke-width="1"/><rect x="864.5" y="831.5" width="5" height="5" fill="#fff" stroke="#4f4ff0" stroke-width="1"/><rect x="1024.5" y="831.5" width="5" height="5" fill="#fff" stroke="#4f4ff0" stroke-width="1"/><rect x="1185.0" y="831.5" width="5" height="5" fill="#fff" stroke="#4f4ff0" stroke-width="1"/>
</svg>
<div class="t" style="left:137px;top:240.5px;font-size:45px;color:#d2007a;-webkit-text-stroke:0.8px #d2007a;transform:scaleX(0.8942);transform-origin:0 0">BEAUTY</div>
<div class="t" style="left:316.5px;top:240.5px;font-size:45px;color:#d2007a;-webkit-text-stroke:0.8px #d2007a;transform:scaleX(0.9308);transform-origin:0 0">SALON</div>
<div class="t" style="left:793.3px;top:536.5px;font-size:45px;color:#d2007a;-webkit-text-stroke:0.8px #d2007a;transform:scaleX(0.8942);transform-origin:0 0">BEAUTY</div>
<div class="t" style="left:972.8px;top:536.5px;font-size:45px;color:#d2007a;-webkit-text-stroke:0.8px #d2007a;transform:scaleX(0.9308);transform-origin:0 0">SALON</div>
<div class="t" style="left:191px;top:286.5px;font-family:'Liberation Serif',serif;font-style:italic;font-size:32px;color:#808080;-webkit-text-stroke:0.45px #808080;transform:scaleX(0.9932);transform-origin:0 0">Ihr neuer Termin</div>
<div class="t" style="left:832.3px;top:582px;font-family:'Liberation Serif',serif;font-style:italic;font-size:32px;color:#808080;-webkit-text-stroke:0.45px #808080;transform:scaleX(0.9939);transform-origin:0 0">Ihre Treue freut uns</div>
<div class="t" style="left:144px;top:384px;font-size:31px;color:#fff;-webkit-text-stroke:0.7px #fff;transform:scaleX(0.8932);transform-origin:0 0">ZEIT</div>
<div class="t" style="left:214px;top:384px;font-size:31px;color:#fff;-webkit-text-stroke:0.7px #fff;transform:scaleX(0.8711);transform-origin:0 0">ZU</div>
<div class="t" style="left:258px;top:384px;font-size:31px;color:#fff;-webkit-text-stroke:0.7px #fff;transform:scaleX(0.9376);transform-origin:0 0">ENTSPANNEN</div>
<div class="t" style="left:137px;top:488px;font-size:58px;font-weight:bold;color:#fff;transform:scaleX(0.8712);transform-origin:0 0">NEU</div>
<div class="t" style="left:296px;top:450px;font-family:'Liberation Serif',serif;font-style:italic;font-weight:bold;font-size:34px;color:#fff;transform:scaleX(0.8756);transform-origin:0 0">Beauty</div>
<div class="t" style="left:296px;top:491px;font-family:'Liberation Serif',serif;font-style:italic;font-weight:bold;font-size:34px;color:#fff;transform:scaleX(0.9168);transform-origin:0 0">Kosmetik</div>
<div class="t" style="left:294.5px;top:534px;font-family:'Liberation Serif',serif;font-style:italic;font-weight:bold;font-size:34px;color:#fff;transform:scaleX(0.8596);transform-origin:0 0">Wellness</div>
<!--/CANVAS-->
</div>
<div id="vscroll" class="a"></div>
<div id="status" class="a"></div>
<!--DOC-->
<div class="t" style="left:83px;top:69px;font-size:11px;color:#e2e2e2;letter-spacing:0.22px">55x85mm_portrait_2s.ai* bei 300 % (CMYK/Vorschau)</div>
<svg style="left:375px;top:72px" width="7" height="7"><path d="M0.500 0.500l6 6M6.500 0.500l-6 6" stroke="#d8d8d8" stroke-width="1.400"/></svg>
<div class="a" style="left:73px;top:84px;width:1284px;height:1px;background:#2c2c2c"></div>
<svg style="left:1342px;top:90px" width="10" height="7"><path d="M0 6.500h9.500L4.750 0z" fill="#d6d6d6"/></svg>
<svg style="left:1342px;top:1010px" width="10" height="7"><path d="M0 0h9.500L4.750 6.500z" fill="#d6d6d6"/></svg>
<div class="a" style="left:1340px;top:547px;width:14px;height:15px;background:#6d6d6d;border-radius:1px"></div>
<div class="a" style="left:73px;top:1022px;width:480px;height:17px;background:#4a4a4a;border-top:1px solid #3a3a3a"></div>
<div class="a" style="left:553px;top:1022px;width:785px;height:17px;background:#3a3a3a"></div>
<div class="a" style="left:1338px;top:1022px;width:19px;height:17px;background:#484848"></div>
<svg style="left:81px;top:1026px" width="20" height="11"><circle cx="5" cy="5.500" r="3.500" fill="none" stroke="#d6d6d6" stroke-width="2.500" stroke-dasharray="1.800 1"/><path d="M10 3h7l-2-2M18 8h-7l2 2" stroke="#d6d6d6" stroke-width="1.300" fill="none"/></svg>
<svg style="left:110px;top:1025px" width="16" height="13"><path d="M5 3H1v9h11V8" fill="none" stroke="#d6d6d6" stroke-width="1.500"/><path d="M5 9c0-4 2-6 6-6V0.500L15.500 4 11 7.500V5c-3 0-5 1.500-6 4z" fill="#d6d6d6"/></svg>
<div class="field" style="left:136px;top:1024px;width:42px;height:15px;background:#a3a3a3;padding:2px 0 0 2px;font-size:10px;border-bottom:none">300%</div><div class="btn" style="left:177px;top:1024px;width:15px;height:15px"></div><svg style="left:181px;top:1030px" width="8" height="5"><path d="M0 0h7l-3.500 4z" fill="#d6d6d6"/></svg>
<svg style="left:201px;top:1027px" width="10" height="9"><path d="M0.800 0v8.500" stroke="#d6d6d6" stroke-width="1.600"/><path d="M9 0v8.500L3 4.250z" fill="#d6d6d6"/></svg>
<svg style="left:220px;top:1027px" width="7" height="9"><path d="M6.500 0v8.500L0.500 4.250z" fill="#d6d6d6"/></svg>
<div class="field" style="left:236px;top:1024px;width:42px;height:15px;background:#a3a3a3;padding:2px 0 0 3px;font-size:10px;border-bottom:none">2</div><div class="btn" style="left:277px;top:1024px;width:15px;height:15px"></div><svg style="left:281px;top:1030px" width="8" height="5"><path d="M0 0h7l-3.500 4z" fill="#d6d6d6"/></svg>
<svg style="left:303px;top:1027px" width="7" height="9"><path d="M0.500 0v8.500L6.500 4.250z" fill="#6c6c6c"/></svg>
<svg style="left:317px;top:1027px" width="10" height="9"><path d="M8.500 0v8.500" stroke="#6c6c6c" stroke-width="1.600"/><path d="M0.500 0v8.500L6.500 4.250z" fill="#6c6c6c"/></svg>
<div class="a" style="left:334px;top:1023px;width:1px;height:16px;background:#3e3e3e"></div><div class="t" style="left:416px;top:1027px;font-size:10px;color:#e0e0e0">Auswahl</div>
<svg style="left:541px;top:1027px" width="7" height="9"><path d="M0.500 0v8.500L6.500 4.250z" fill="#d6d6d6"/></svg>
<svg style="left:559px;top:1027px" width="7" height="9"><path d="M6.500 0v8.500L0.500 4.250z" fill="#d6d6d6"/></svg>
<svg style="left:1325px;top:1027px" width="8" height="9"><path d="M0.500 0v8.500L7 4.250z" fill="#d6d6d6"/></svg>
<div class="a" style="left:943px;top:1024px;width:15px;height:14px;background:#6d6d6d;border-radius:1px"></div>
<!--/DOC-->
<!-- ======= RIGHT PANELS ======= -->
<div id="right" class="a" style="left:1357px;top:65px;width:563px;height:974px;background:#3d3d3d"></div>
<!--PANELS-->
<div class="a" style="left:1357px;top:65px;width:563px;height:974px;background:#3a3a3a;"></div><div class="a" style="left:1357px;top:65px;width:297px;height:12px;background:#323232;"></div><svg style="left:1644px;top:68px" width="9" height="7"><path d="M0 0v6l4-3zM5 0v6l4-3z" fill="#d6d6d6"/></svg>
<div class="a" style="left:1658px;top:65px;width:262px;height:12px;background:#323232;"></div><svg style="left:1908px;top:68px" width="9" height="7"><path d="M0 0v6l4-3zM5 0v6l4-3z" fill="#d6d6d6"/></svg>
<div class="a" style="left:1654px;top:65px;width:4px;height:974px;background:#2c2c2c;"></div><div class="a" style="left:1357px;top:77px;width:297px;height:962px;background:#4a4a4a;border-left:1px solid #2a2a2a"></div><div class="a" style="left:1358px;top:77px;width:296px;height:16px;background:#323232;"></div><div class="a" style="left:1358px;top:77px;width:47px;height:17px;background:#4a4a4a;border-right:1px solid #2a2a2a;border-top:1px solid #5a5a5a"></div><div class="t" style="left:1364px;top:81px;font-size:10px;font-weight:bold;color:#e8e8e8;letter-spacing:-0.3px">Ebenen</div><svg style="left:1636px;top:81px" width="15" height="9"><path d="M0 1.500h5l-2.500 3z" fill="#d6d6d6"/><path d="M6 1h8M6 3.500h8M6 6h8M6 8.500h8" stroke="#d6d6d6" stroke-width="1"/></svg>

<div class="a" style="left:1362px;top:100px;width:288px;height:921px;background:#4a4a4a;border:1px solid #303030"></div><div class="a" style="left:1363px;top:101px;width:286px;height:20px;background:#5b6679;"></div><div class="a" style="left:1363px;top:121px;width:286px;height:1px;background:#303030;"></div><div class="a" style="left:1383px;top:101px;width:1px;height:20px;background:#3a3a3a;"></div><div class="a" style="left:1404px;top:101px;width:1px;height:20px;background:#3a3a3a;"></div><div class="a" style="left:1614px;top:101px;width:1px;height:20px;background:#3a3a3a;"></div><div class="a" style="left:1405px;top:101px;width:5px;height:20px;background:#5252e6;"></div><svg style="left:1416px;top:107px" width="7" height="9"><path d="M0 0v8.500l6.500-4.250z" fill="#d6d6d6"/></svg>
<div class="a" style="left:1432px;top:102px;width:18px;height:18px;background:#fff;border:1px solid #0a0a0a"></div><svg style="left:1434px;top:109px" width="14" height="5"><path d="M0 2.500c2-3 3 3 5 0s3-3 4 0 3 3 5 0" stroke="#999" fill="none" stroke-width="1"/></svg>
<div class="t" style="left:1455px;top:106px;font-size:11px;color:#e6e6e6;letter-spacing:-0.55px">Rückseite</div><svg style="left:1619px;top:106px" width="11" height="11"><circle cx="5.500" cy="5.500" r="4" fill="none" stroke="#d6d6d6" stroke-width="1.100"/></svg>
<svg style="left:1366px;top:106px" width="13" height="9"><path d="M0.500 4.500C3 0 10 0 12.500 4.500 10 9 3 9 0.500 4.500z" fill="none" stroke="#d6d6d6" stroke-width="1.200"/><circle cx="6.500" cy="4.200" r="2.300" fill="#d6d6d6"/><circle cx="6.500" cy="4.200" r="1" fill="#444"/></svg>
<div class="a" style="left:1635px;top:107px;width:8px;height:8px;background:#4f4ffc;border:1px solid #222"></div><svg style="left:1644px;top:101px" width="5" height="5"><path d="M0 0h5v5z" fill="#e8e8e8"/></svg>
<div class="a" style="left:1363px;top:122px;width:286px;height:20px;background:#4a4a4a;"></div><div class="a" style="left:1363px;top:142px;width:286px;height:1px;background:#303030;"></div><div class="a" style="left:1383px;top:122px;width:1px;height:20px;background:#3a3a3a;"></div><div class="a" style="left:1404px;top:122px;width:1px;height:20px;background:#3a3a3a;"></div><div class="a" style="left:1614px;top:122px;width:1px;height:20px;background:#3a3a3a;"></div><div class="a" style="left:1405px;top:122px;width:5px;height:20px;background:#138a52;"></div><svg style="left:1416px;top:128px" width="7" height="9"><path d="M0 0v8.500l6.500-4.250z" fill="#d6d6d6"/></svg>
<div class="a" style="left:1432px;top:123px;width:18px;height:18px;background:#fff;border:1px solid #0a0a0a"></div><div class="a" style="left:1435px;top:127px;width:4px;height:8px;background:#d878a8;"></div><div class="a" style="left:1443px;top:134px;width:4px;height:2px;background:#d878a8;"></div><div class="t" style="left:1455px;top:127px;font-size:11px;color:#e6e6e6;letter-spacing:-0.55px">Vorderseite</div><svg style="left:1619px;top:127px" width="11" height="11"><circle cx="5.500" cy="5.500" r="4" fill="none" stroke="#d6d6d6" stroke-width="1.100"/></svg>
<svg style="left:1366px;top:127px" width="13" height="9"><path d="M0.500 4.500C3 0 10 0 12.500 4.500 10 9 3 9 0.500 4.500z" fill="none" stroke="#d6d6d6" stroke-width="1.200"/><circle cx="6.500" cy="4.200" r="2.300" fill="#d6d6d6"/><circle cx="6.500" cy="4.200" r="1" fill="#444"/></svg>
<div class="a" style="left:1363px;top:143px;width:286px;height:20px;background:#4a4a4a;"></div><div class="a" style="left:1363px;top:163px;width:286px;height:1px;background:#303030;"></div><div class="a" style="left:1383px;top:143px;width:1px;height:20px;background:#3a3a3a;"></div><div class="a" style="left:1404px;top:143px;width:1px;height:20px;background:#3a3a3a;"></div><div class="a" style="left:1614px;top:143px;width:1px;height:20px;background:#3a3a3a;"></div><div class="a" style="left:1405px;top:143px;width:5px;height:20px;background:#f0640f;"></div><svg style="left:1416px;top:149px" width="7" height="9"><path d="M0 0v8.500l6.500-4.250z" fill="#d6d6d6"/></svg>
<div class="a" style="left:1432px;top:144px;width:18px;height:18px;background:#fff;border:1px solid #0a0a0a"></div><div class="a" style="left:1433px;top:145px;width:16px;height:16px;background:transparent;border:1.500px solid #d8c8a0"></div><div class="a" style="left:1441px;top:151px;width:3px;height:4px;background:#b8a0a8;"></div><div class="t" style="left:1455px;top:148px;font-size:11px;color:#e6e6e6;letter-spacing:-0.55px">Vorlage Vorderseite</div><svg style="left:1619px;top:148px" width="11" height="11"><circle cx="5.500" cy="5.500" r="4" fill="none" stroke="#d6d6d6" stroke-width="1.100"/></svg>
<svg style="left:1389px;top:148px" width="10" height="11"><rect x="0.500" y="4.500" width="8.500" height="6" fill="#d6d6d6"/><path d="M2.500 4.500V3a2.300 2.300 0 0 1 4.600 0v1.500" fill="none" stroke="#d6d6d6" stroke-width="1.300"/></svg>
<div class="a" style="left:1363px;top:164px;width:286px;height:20px;background:#4a4a4a;"></div><div class="a" style="left:1363px;top:184px;width:286px;height:1px;background:#303030;"></div><div class="a" style="left:1383px;top:164px;width:1px;height:20px;background:#3a3a3a;"></div><div class="a" style="left:1404px;top:164px;width:1px;height:20px;background:#3a3a3a;"></div><div class="a" style="left:1614px;top:164px;width:1px;height:20px;background:#3a3a3a;"></div><div class="a" style="left:1405px;top:164px;width:5px;height:20px;background:#f0640f;"></div><svg style="left:1416px;top:170px" width="7" height="9"><path d="M0 0v8.500l6.500-4.250z" fill="#d6d6d6"/></svg>
<div class="a" style="left:1432px;top:165px;width:18px;height:18px;background:#fff;border:1px solid #0a0a0a"></div><div class="a" style="left:1433px;top:166px;width:16px;height:16px;background:transparent;border:1.500px solid #d8c8a0"></div><div class="a" style="left:1441px;top:172px;width:3px;height:4px;background:#b8a0a8;"></div><div class="t" style="left:1455px;top:169px;font-size:11px;color:#e6e6e6;letter-spacing:-0.55px">Vorlage Rückseite</div><svg style="left:1619px;top:169px" width="11" height="11"><circle cx="5.500" cy="5.500" r="4" fill="none" stroke="#d6d6d6" stroke-width="1.100"/></svg>
<svg style="left:1389px;top:169px" width="10" height="11"><rect x="0.500" y="4.500" width="8.500" height="6" fill="#d6d6d6"/><path d="M2.500 4.500V3a2.300 2.300 0 0 1 4.600 0v1.500" fill="none" stroke="#d6d6d6" stroke-width="1.300"/></svg>
<div class="t" style="left:1362px;top:1024px;font-size:10px;color:#e0e0e0">4 Ebenen</div><svg style="left:1512px;top:1022px" width="15" height="14"><circle cx="9" cy="5" r="3.800" fill="none" stroke="#d6d6d6" stroke-width="1.500"/><path d="M6 8L1.500 12.500" stroke="#d6d6d6" stroke-width="2"/></svg>
<svg style="left:1537px;top:1023px" width="14" height="13"><rect x="0.600" y="0.600" width="8" height="8" fill="#777" stroke="#d6d6d6" stroke-width="1.200"/><rect x="4.600" y="4.600" width="8" height="8" fill="#4a4a4a" stroke="#d6d6d6" stroke-width="1.200"/></svg>
<svg style="left:1562px;top:1023px" width="16" height="13"><path d="M0 2h4l-1.500-2M5 2v4h3" stroke="#d6d6d6" fill="none" stroke-width="1.200"/><path d="M8 3h7v9H8z" fill="#d6d6d6"/></svg>
<svg style="left:1590px;top:1024px" width="14" height="12"><path d="M0 0h13v11H3V4H0z" fill="#d6d6d6"/><path d="M0 4h3v0" stroke="#d6d6d6"/></svg>
<svg style="left:1615px;top:1022px" width="14" height="14"><path d="M1 3.500h12M5 3V1.500h4V3" stroke="#d6d6d6" fill="none" stroke-width="1.300"/><path d="M2.500 5h9l-1 8.500h-7z" fill="#777" stroke="#d6d6d6" stroke-width="1"/><path d="M5.500 6.500v5.500M8.500 6.500v5.500" stroke="#d6d6d6" stroke-width=".8"/></svg>

<!--RIGHTCOL-->
<div class="a" style="left:1658px;top:77px;width:262px;height:167px;background:#4a4a4a;"></div><div class="a" style="left:1658px;top:77px;width:262px;height:16px;background:#323232;"></div><div class="a" style="left:1658px;top:77px;width:63px;height:17px;background:#4a4a4a;border-right:1px solid #2a2a2a;border-top:1px solid #5a5a5a"></div><svg style="left:1663px;top:81px" width="6" height="10"><path d="M0.500 3.500l2.500-2.500 2.500 2.500M0.500 6l2.500 2.500 2.500-2.500" fill="none" stroke="#d6d6d6" stroke-width="1.100"/></svg>
<div class="t" style="left:1671px;top:81px;font-size:10px;font-weight:bold;color:#e8e8e8;letter-spacing:-0.3px">Farbhilfe</div><div class="a" style="left:1721px;top:77px;width:40px;height:16px;background:#3a3a3a;border-right:1px solid #2a2a2a"></div><div class="t" style="left:1729px;top:81px;font-size:10px;font-weight:bold;color:#8c8c8c;letter-spacing:-0.3px">Kuler</div><svg style="left:1902px;top:81px" width="15" height="9"><path d="M0 1.500h5l-2.500 3z" fill="#d6d6d6"/><path d="M6 1h8M6 3.500h8M6 6h8M6 8.500h8" stroke="#d6d6d6" stroke-width="1"/></svg>

<div class="a" style="left:1663px;top:102px;width:21px;height:21px;background:#8c8c8c;border:2px solid #f2f2f2;outline:1px solid #2a2a2a"></div><div class="a" style="left:1665px;top:104px;width:17px;height:17px;background:transparent;border:1px solid #1a1a1a"></div><div class="a" style="left:1691px;top:102px;width:207px;height:21px;background:#e6e6e6;border:1px solid #2a2a2a"></div><div class="a" style="left:1694px;top:104px;width:16px;height:17px;background:#ee9ac4;"></div><div class="a" style="left:1710px;top:104px;width:16px;height:17px;background:#b4547e;"></div><div class="a" style="left:1726px;top:104px;width:16px;height:17px;background:#b09c5a;"></div><div class="a" style="left:1742px;top:104px;width:16px;height:17px;background:#e0ecc8;"></div><div class="a" style="left:1758px;top:104px;width:16px;height:17px;background:#9a9cb4;"></div><div class="a" style="left:1693px;top:103px;width:17px;height:19px;background:transparent;border:1px solid #111"></div><div class="a" style="left:1694px;top:104px;width:15px;height:17px;background:transparent;border:1px solid #fff"></div><div class="a" style="left:1693px;top:103px;width:82px;height:19px;background:transparent;border:1px solid #222"></div><div class="a" style="left:1897px;top:102px;width:16px;height:21px;background:#5c5c5c;border:1px solid #2e2e2e"></div><svg style="left:1901px;top:110px" width="8" height="5"><path d="M0 0h7l-3.500 4z" fill="#d6d6d6"/></svg>
<div class="t" style="left:1681px;top:134px;font-size:10px;font-weight:bold;color:#e6e6e6">Schattierungen</div><svg style="left:1785px;top:137px" width="6" height="4"><path d="M0 0h6l-3 3.500z" fill="#d6d6d6"/></svg>
<div class="t" style="left:1848px;top:134px;font-size:10px;font-weight:bold;color:#e6e6e6">Farbtöne</div><div class="a" style="left:1663px;top:150px;width:251px;height:76px;background:#2c2c2c;"></div><div class="a" style="left:1663px;top:151px;width:27px;height:14px;background:#1e1e1e;"></div><div class="a" style="left:1691px;top:151px;width:25px;height:14px;background:#5e5459;"></div><div class="a" style="left:1717px;top:151px;width:26px;height:14px;background:#8c7a84;"></div><div class="a" style="left:1744px;top:151px;width:25px;height:14px;background:#c094ac;"></div><div class="a" style="left:1770px;top:151px;width:26px;height:14px;background:#ee96c0;"></div><div class="a" style="left:1797px;top:151px;width:25px;height:14px;background:#f0a8cc;"></div><div class="a" style="left:1823px;top:151px;width:25px;height:14px;background:#f4c0da;"></div><div class="a" style="left:1849px;top:151px;width:26px;height:14px;background:#f8d4e6;"></div><div class="a" style="left:1876px;top:151px;width:25px;height:14px;background:#fce8f2;"></div><div class="a" style="left:1902px;top:151px;width:11px;height:14px;background:#3c3c3c;"></div><div class="a" style="left:1663px;top:166px;width:27px;height:14px;background:#1e1e1e;"></div><div class="a" style="left:1691px;top:166px;width:25px;height:14px;background:#57494f;"></div><div class="a" style="left:1717px;top:166px;width:26px;height:14px;background:#7d5f6c;"></div><div class="a" style="left:1744px;top:166px;width:25px;height:14px;background:#9c5e7c;"></div><div class="a" style="left:1770px;top:166px;width:26px;height:14px;background:#b0547c;"></div><div class="a" style="left:1797px;top:166px;width:25px;height:14px;background:#c07898;"></div><div class="a" style="left:1823px;top:166px;width:25px;height:14px;background:#d09cb4;"></div><div class="a" style="left:1849px;top:166px;width:26px;height:14px;background:#e0bccc;"></div><div class="a" style="left:1876px;top:166px;width:25px;height:14px;background:#f0dce4;"></div><div class="a" style="left:1902px;top:166px;width:11px;height:14px;background:#3c3c3c;"></div><div class="a" style="left:1663px;top:181px;width:27px;height:15px;background:#1e1e1e;"></div><div class="a" style="left:1691px;top:181px;width:25px;height:15px;background:#55524a;"></div><div class="a" style="left:1717px;top:181px;width:26px;height:15px;background:#807a64;"></div><div class="a" style="left:1744px;top:181px;width:25px;height:15px;background:#9c9060;"></div><div class="a" style="left:1770px;top:181px;width:26px;height:15px;background:#b09c5c;"></div><div class="a" style="left:1797px;top:181px;width:25px;height:15px;background:#c0b07c;"></div><div class="a" style="left:1823px;top:181px;width:25px;height:15px;background:#d0c49c;"></div><div class="a" style="left:1849px;top:181px;width:26px;height:15px;background:#e0d8bc;"></div><div class="a" style="left:1876px;top:181px;width:25px;height:15px;background:#f0ecdc;"></div><div class="a" style="left:1902px;top:181px;width:11px;height:14px;background:#3c3c3c;"></div><div class="a" style="left:1663px;top:197px;width:27px;height:14px;background:#1e1e1e;"></div><div class="a" style="left:1691px;top:197px;width:25px;height:14px;background:#5c5e58;"></div><div class="a" style="left:1717px;top:197px;width:26px;height:14px;background:#9ca294;"></div><div class="a" style="left:1744px;top:197px;width:25px;height:14px;background:#c0c8b0;"></div><div class="a" style="left:1770px;top:197px;width:26px;height:14px;background:#dcecc4;"></div><div class="a" style="left:1797px;top:197px;width:25px;height:14px;background:#e4f0d0;"></div><div class="a" style="left:1823px;top:197px;width:25px;height:14px;background:#ecf4dc;"></div><div class="a" style="left:1849px;top:197px;width:26px;height:14px;background:#f4f8e8;"></div><div class="a" style="left:1876px;top:197px;width:25px;height:14px;background:#fafcf4;"></div><div class="a" style="left:1902px;top:197px;width:11px;height:14px;background:#3c3c3c;"></div><div class="a" style="left:1663px;top:212px;width:27px;height:14px;background:#1e1e1e;"></div><div class="a" style="left:1691px;top:212px;width:25px;height:14px;background:#54545a;"></div><div class="a" style="left:1717px;top:212px;width:26px;height:14px;background:#74767e;"></div><div class="a" style="left:1744px;top:212px;width:25px;height:14px;background:#888aa0;"></div><div class="a" style="left:1770px;top:212px;width:26px;height:14px;background:#989ab4;"></div><div class="a" style="left:1797px;top:212px;width:25px;height:14px;background:#acaec4;"></div><div class="a" style="left:1823px;top:212px;width:25px;height:14px;background:#c0c2d0;"></div><div class="a" style="left:1849px;top:212px;width:26px;height:14px;background:#d4d4e0;"></div><div class="a" style="left:1876px;top:212px;width:25px;height:14px;background:#e8e8ee;"></div><div class="a" style="left:1902px;top:212px;width:11px;height:14px;background:#3c3c3c;"></div><svg style="left:1668px;top:229px" width="20" height="14"><rect x="1" y="1" width="4" height="4" fill="#8a8a8a" stroke="#d6d6d6" stroke-width=".8"/><rect x="1" y="6" width="4" height="4" fill="#8a8a8a" stroke="#d6d6d6" stroke-width=".8"/><rect x="6" y="1" width="4" height="4" fill="#8a8a8a" stroke="#d6d6d6" stroke-width=".8"/><rect x="6" y="6" width="4" height="4" fill="#8a8a8a" stroke="#d6d6d6" stroke-width=".8"/><rect x="11" y="1" width="4" height="4" fill="#8a8a8a" stroke="#d6d6d6" stroke-width=".8"/><rect x="11" y="6" width="4" height="4" fill="#8a8a8a" stroke="#d6d6d6" stroke-width=".8"/><path d="M15 10h5l-2.500 3z" fill="#d6d6d6"/></svg>
<div class="t" style="left:1695px;top:230px;font-size:10px;color:#e6e6e6">Ohne</div><svg style="left:1853px;top:230px" width="14" height="14"><circle cx="7" cy="7" r="6" fill="#8a8a8a" stroke="#d6d6d6" stroke-width="1.200"/><path d="M7 7V1M7 7l5-3M7 7l4 4.500M7 7l-4 4.500M7 7L1.500 5" stroke="#444" stroke-width="1"/><circle cx="7" cy="7" r="1.800" fill="#333"/></svg>
<svg style="left:1877px;top:230px" width="18" height="13"><path d="M3 5v6M0 8h6" stroke="#d6d6d6" stroke-width="1.800"/><rect x="6.600" y="1.600" width="10" height="9" fill="#777" stroke="#d6d6d6" stroke-width="1.200"/><path d="M10 2v9M13.500 2v9" stroke="#d6d6d6"/></svg>
<svg style="left:1909px;top:236px" width="8" height="8"><path d="M7 1v1M5 3v1M7 3v1M3 5v1M5 5v1M7 5v1M1 7v1M3 7v1M5 7v1M7 7v1" stroke="#2e2e2e" stroke-width="1"/></svg>
<div class="a" style="left:1658px;top:249px;width:262px;height:232px;background:#4a4a4a;"></div><div class="a" style="left:1658px;top:249px;width:262px;height:16px;background:#323232;"></div><div class="a" style="left:1658px;top:249px;width:56px;height:17px;background:#4a4a4a;border-right:1px solid #2a2a2a;border-top:1px solid #5a5a5a"></div><svg style="left:1663px;top:253px" width="6" height="10"><path d="M0.500 3.500l2.500-2.500 2.500 2.500M0.500 6l2.500 2.500 2.500-2.500" fill="none" stroke="#d6d6d6" stroke-width="1.100"/></svg>
<div class="t" style="left:1671px;top:253px;font-size:10px;font-weight:bold;color:#e8e8e8;letter-spacing:-0.3px">Verlauf</div><svg style="left:1902px;top:253px" width="15" height="9"><path d="M0 1.500h5l-2.500 3z" fill="#d6d6d6"/><path d="M6 1h8M6 3.500h8M6 6h8M6 8.500h8" stroke="#d6d6d6" stroke-width="1"/></svg>

<div class="a" style="left:1664px;top:272px;width:30px;height:30px;background:linear-gradient(90deg,#fff,#1a1a1a);border:1px solid #222"></div><svg style="left:1698px;top:286px" width="6" height="4"><path d="M0 0h6l-3 3.500z" fill="#d6d6d6"/></svg>
<div class="t" style="left:1730px;top:277px;font-size:10px;font-weight:bold;color:#e0e0e0">Art:</div><div class="a" style="left:1752px;top:272px;width:143px;height:19px;background:#7b7b7b;border:1px solid #3c3c3c"></div><div class="a" style="left:1894px;top:272px;width:19px;height:19px;background:#5c5c5c;border:1px solid #3c3c3c"></div><svg style="left:1900px;top:279px" width="8" height="5"><path d="M0 0h7l-3.500 4z" fill="#d6d6d6"/></svg>
<div class="t" style="left:1712px;top:303px;font-size:10px;color:#858585">Kontur:</div><div class="a" style="left:1753px;top:299px;width:23px;height:19px;background:#565656;border:1px solid #3a3a3a"></div><svg style="left:1757px;top:302px" width="15" height="13"><path d="M2 12V3h11M5 12V6h8" fill="none" stroke="#7a7a7a" stroke-width="1.200"/></svg>
<div class="a" style="left:1776px;top:299px;width:23px;height:19px;background:#565656;border:1px solid #3a3a3a"></div><svg style="left:1780px;top:302px" width="15" height="13"><path d="M2 12V3h11M5 12V6h8" fill="none" stroke="#7a7a7a" stroke-width="1.200"/></svg>
<div class="a" style="left:1799px;top:299px;width:23px;height:19px;background:#565656;border:1px solid #3a3a3a"></div><svg style="left:1803px;top:302px" width="15" height="13"><path d="M2 12V3h11M5 12V6h8" fill="none" stroke="#7a7a7a" stroke-width="1.200"/></svg>
<div class="a" style="left:1675px;top:320px;width:19px;height:19px;background:#4a4a4a;border:1px solid #2c2c2c"></div><div class="a" style="left:1680px;top:325px;width:9px;height:9px;background:#4a4a4a;border:1px solid #2c2c2c"></div><div class="a" style="left:1664px;top:309px;width:20px;height:19px;background:#4a4a4a;border:1px solid #2c2c2c"></div><div class="t" style="left:1670px;top:312px;font-size:12px;color:#e0e0e0">?</div><div class="t" style="left:1688px;top:321px;font-size:7px;color:#bbb">?</div><div class="t" style="left:1677px;top:331px;font-size:7px;color:#bbb">?</div><div class="t" style="left:1688px;top:331px;font-size:7px;color:#bbb">?</div><svg style="left:1733px;top:328px" width="13" height="12"><path d="M0.500 11.500h12M0.500 11.500L10 1.500" fill="none" stroke="#7d7d7d" stroke-width="1.100"/></svg>
<div class="a" style="left:1753px;top:326px;width:52px;height:17px;background:#7b7b7b;border:1px solid #3c3c3c"></div><div class="a" style="left:1804px;top:326px;width:16px;height:17px;background:#5c5c5c;border:1px solid #3c3c3c"></div><svg style="left:1808px;top:333px" width="8" height="5"><path d="M0 0h7l-3.500 4z" fill="#8a8a8a"/></svg>
<svg style="left:1731px;top:352px" width="17" height="17"><path d="M2 0v16M0 2l2-2 2 2M0 14l2 2 2-2" fill="none" stroke="#7d7d7d"/><ellipse cx="10.500" cy="8" rx="4.500" ry="3.500" fill="none" stroke="#7d7d7d" stroke-width="1.200"/><path d="M5 14h11" stroke="#7d7d7d"/></svg>
<div class="a" style="left:1753px;top:352px;width:52px;height:17px;background:#7b7b7b;border:1px solid #3c3c3c"></div><div class="a" style="left:1804px;top:352px;width:16px;height:17px;background:#5c5c5c;border:1px solid #3c3c3c"></div><svg style="left:1808px;top:359px" width="8" height="5"><path d="M0 0h7l-3.500 4z" fill="#8a8a8a"/></svg>
<svg style="left:1670px;top:348px" width="18" height="15"><rect x="1" y="1" width="7" height="5" fill="#6c6c6c"/><rect x="9" y="8" width="7" height="5" fill="#6c6c6c"/><path d="M11 2h4l-2 3M7 12H3l2-3" stroke="#6c6c6c" fill="none"/></svg>
<div class="a" style="left:1669px;top:385px;width:215px;height:18px;background:linear-gradient(90deg,#fafafa,#0a0a0a);border:1px solid #2a2a2a"></div><svg style="left:1895px;top:389px" width="13" height="14"><path d="M1 3h11M4.500 3V1h4v2" stroke="#6a6a6a" fill="none" stroke-width="1.200"/><path d="M2.500 4.500h8l-1 8.500h-6z" fill="none" stroke="#6a6a6a" stroke-width="1.100"/><path d="M5 6v5.500M8 6v5.500" stroke="#6a6a6a" stroke-width=".8"/></svg>
<div class="t" style="left:1702px;top:435px;font-size:10px;color:#858585">Deckkraft:</div><div class="a" style="left:1753px;top:430px;width:52px;height:19px;background:#7b7b7b;border:1px solid #3c3c3c"></div><div class="a" style="left:1804px;top:430px;width:16px;height:19px;background:#5c5c5c;border:1px solid #3c3c3c"></div><svg style="left:1808px;top:438px" width="8" height="5"><path d="M0 0h7l-3.500 4z" fill="#8a8a8a"/></svg>
<div class="t" style="left:1709px;top:461px;font-size:10px;color:#858585">Position:</div><div class="a" style="left:1753px;top:456px;width:52px;height:19px;background:#7b7b7b;border:1px solid #3c3c3c"></div><div class="a" style="left:1804px;top:456px;width:16px;height:19px;background:#5c5c5c;border:1px solid #3c3c3c"></div><svg style="left:1808px;top:464px" width="8" height="5"><path d="M0 0h7l-3.500 4z" fill="#8a8a8a"/></svg>
<svg style="left:1909px;top:472px" width="8" height="8"><path d="M7 1v1M5 3v1M7 3v1M3 5v1M5 5v1M7 5v1M1 7v1M3 7v1M5 7v1M7 7v1" stroke="#2e2e2e" stroke-width="1"/></svg>
<div class="a" style="left:1658px;top:485px;width:262px;height:204px;background:#4a4a4a;"></div><div class="a" style="left:1658px;top:485px;width:262px;height:16px;background:#323232;"></div><div class="a" style="left:1658px;top:485px;width:63px;height:17px;background:#4a4a4a;border-right:1px solid #2a2a2a;border-top:1px solid #5a5a5a"></div><div class="t" style="left:1664px;top:489px;font-size:10px;font-weight:bold;color:#e8e8e8;letter-spacing:-0.3px">Farbfelder</div><svg style="left:1902px;top:489px" width="15" height="9"><path d="M0 1.500h5l-2.500 3z" fill="#d6d6d6"/><path d="M6 1h8M6 3.500h8M6 6h8M6 8.500h8" stroke="#d6d6d6" stroke-width="1"/></svg>

<div class="a" style="left:1673px;top:519px;width:20px;height:19px;background:#4a4a4a;border:1px solid #2c2c2c"></div><div class="a" style="left:1678px;top:524px;width:10px;height:9px;background:#4a4a4a;border:1px solid #2c2c2c"></div><div class="a" style="left:1663px;top:507px;width:20px;height:20px;background:#4a4a4a;border:1px solid #2c2c2c"></div><div class="t" style="left:1669px;top:511px;font-size:12px;color:#e0e0e0">?</div><div class="t" style="left:1687px;top:520px;font-size:7px;color:#bbb">?</div><div class="t" style="left:1675px;top:530px;font-size:7px;color:#bbb">?</div><div class="t" style="left:1687px;top:530px;font-size:7px;color:#bbb">?</div><div class="a" style="left:1862px;top:508px;width:26px;height:22px;background:#5e5e5e;border:1px solid #2c2c2c"></div><div class="a" style="left:1887px;top:508px;width:27px;height:22px;background:#353535;border:1px solid #2c2c2c"></div><svg style="left:1868px;top:512px" width="14" height="14"><path d="M0 2h13M0 6.500h13M0 11h13" stroke="#d6d6d6" stroke-width="2"/></svg>
<svg style="left:1893px;top:512px" width="15" height="14"><rect x="0" y="0" width="4" height="4" fill="#d6d6d6"/><rect x="0" y="5" width="4" height="4" fill="#d6d6d6"/><rect x="0" y="10" width="4" height="4" fill="#d6d6d6"/><rect x="5" y="0" width="4" height="4" fill="#d6d6d6"/><rect x="5" y="5" width="4" height="4" fill="#d6d6d6"/><rect x="5" y="10" width="4" height="4" fill="#d6d6d6"/><rect x="10" y="0" width="4" height="4" fill="#d6d6d6"/><rect x="10" y="5" width="4" height="4" fill="#d6d6d6"/><rect x="10" y="10" width="4" height="4" fill="#d6d6d6"/></svg>
<div class="a" style="left:1663px;top:541px;width:251px;height:128px;background:#4a4a4a;border:1px solid #303030"></div><svg style="left:1665px;top:543px" width="13" height="14"><rect width="13" height="14" fill="#fff"/><path d="M0 14L13 0" stroke="#e0141e" stroke-width="2"/></svg>
<svg style="left:1679px;top:543px" width="13" height="14"><rect width="13" height="14" fill="#fff"/><circle cx="6.5" cy="7.0" r="3.500" fill="none" stroke="#111"/><circle cx="6.5" cy="7.0" r="1.300" fill="#111"/><path d="M6.5 0v14M0 7.0h13" stroke="#111" stroke-width=".8"/></svg>
<div class="a" style="left:1693px;top:543px;width:13px;height:14px;background:#ffffff;"></div><div class="a" style="left:1707px;top:543px;width:13px;height:14px;background:#000000;"></div><div class="a" style="left:1721px;top:543px;width:13px;height:14px;background:#e2001a;"></div><div class="a" style="left:1735px;top:543px;width:13px;height:14px;background:#ffed00;"></div><div class="a" style="left:1749px;top:543px;width:13px;height:14px;background:#009640;"></div><div class="a" style="left:1763px;top:543px;width:13px;height:14px;background:#009fe3;"></div><div class="a" style="left:1777px;top:543px;width:13px;height:14px;background:#312783;"></div><div class="a" style="left:1791px;top:543px;width:13px;height:14px;background:#e5007d;"></div><div class="a" style="left:1805px;top:543px;width:13px;height:14px;background:#be0a26;"></div><div class="a" style="left:1819px;top:543px;width:13px;height:14px;background:#e6332a;"></div><div class="a" style="left:1833px;top:543px;width:13px;height:14px;background:#e94e1b;"></div><div class="a" style="left:1847px;top:543px;width:13px;height:14px;background:#f39200;"></div><div class="a" style="left:1861px;top:543px;width:13px;height:14px;background:#f9b233;"></div><div class="a" style="left:1875px;top:543px;width:13px;height:14px;background:#fcea10;"></div><div class="a" style="left:1665px;top:558px;width:13px;height:13px;background:#dedc00;"></div><div class="a" style="left:1679px;top:558px;width:13px;height:13px;background:#95c11f;"></div><div class="a" style="left:1693px;top:558px;width:13px;height:13px;background:#3aaa35;"></div><div class="a" style="left:1707px;top:558px;width:13px;height:13px;background:#2d9a35;"></div><div class="a" style="left:1721px;top:558px;width:13px;height:13px;background:#1a7a3c;"></div><div class="a" style="left:1735px;top:558px;width:13px;height:13px;background:#4db568;"></div><div class="a" style="left:1749px;top:558px;width:13px;height:13px;background:#2fa9a0;"></div><div class="a" style="left:1763px;top:558px;width:13px;height:13px;background:#5bb6e6;"></div><div class="a" style="left:1777px;top:558px;width:13px;height:13px;background:#2a7dc1;"></div><div class="a" style="left:1791px;top:558px;width:13px;height:13px;background:#283c96;"></div><div class="a" style="left:1805px;top:558px;width:13px;height:13px;background:#262a6e;"></div><div class="a" style="left:1819px;top:558px;width:13px;height:13px;background:#662483;"></div><div class="a" style="left:1833px;top:558px;width:13px;height:13px;background:#951b81;"></div><div class="a" style="left:1847px;top:558px;width:13px;height:13px;background:#a3195b;"></div><div class="a" style="left:1861px;top:558px;width:13px;height:13px;background:#d60b52;"></div><div class="a" style="left:1875px;top:558px;width:13px;height:13px;background:#e71d73;"></div><div class="a" style="left:1665px;top:572px;width:13px;height:13px;background:#cbbba0;"></div><div class="a" style="left:1679px;top:572px;width:13px;height:13px;background:#a48a7b;"></div><div class="a" style="left:1693px;top:572px;width:13px;height:13px;background:#7b6a58;"></div><div class="a" style="left:1707px;top:572px;width:13px;height:13px;background:#655547;"></div><div class="a" style="left:1721px;top:572px;width:13px;height:13px;background:#c69c6d;"></div><div class="a" style="left:1735px;top:572px;width:13px;height:13px;background:#b17f4a;"></div><div class="a" style="left:1749px;top:572px;width:13px;height:13px;background:#8f5e2e;"></div><div class="a" style="left:1763px;top:572px;width:13px;height:13px;background:#7b4e27;"></div><div class="a" style="left:1777px;top:572px;width:13px;height:13px;background:#6b3f1b;"></div><div class="a" style="left:1791px;top:572px;width:13px;height:13px;background:#4a3022;"></div><div class="a" style="left:1805px;top:572px;width:13px;height:13px;background:linear-gradient(90deg,#fff,#111);"></div><div class="a" style="left:1819px;top:572px;width:13px;height:13px;background:#000000;"></div><div class="a" style="left:1833px;top:572px;width:13px;height:13px;background:radial-gradient(circle,#e0e0e0 10%,#444 50%,#000 75%);"></div><div class="a" style="left:1847px;top:572px;width:13px;height:13px;background:#0a0a0a;"></div><div class="a" style="left:1861px;top:572px;width:13px;height:13px;background:linear-gradient(90deg,#d07a30,#fff0d8 50%,#c06a28);"></div><div class="a" style="left:1875px;top:572px;width:13px;height:13px;background:radial-gradient(circle,#ffe0b0 5%,#d07a30 40%,#3a1a08 80%);"></div><div class="a" style="left:1665px;top:586px;width:13px;height:13px;background:#e03a1a;"></div><svg style="left:1665px;top:586px" width="13" height="13"><path d="M2 3h3M7 2h4M3 7h5M9 6h3M1 10h4M7 10h5M4 5h2M6 12h3" stroke="#f0b000" stroke-width="1.200"/></svg>
<div class="a" style="left:1679px;top:586px;width:13px;height:13px;background:#f08a00;"></div><svg style="left:1679px;top:586px" width="13" height="13"><path d="M13 13H5L13 5z" fill="#fff"/><path d="M8 13L13 8" stroke="#000" stroke-width="1.500"/></svg>
<div class="a" style="left:1693px;top:586px;width:13px;height:13px;background:#9a9a8c;"></div><svg style="left:1693px;top:586px" width="13" height="13"><path d="M13 13H5L13 5z" fill="#fff"/><path d="M8 13L13 8" stroke="#000" stroke-width="1.500"/></svg>
<div class="a" style="left:1707px;top:586px;width:13px;height:13px;background:#3a3c36;"></div><svg style="left:1707px;top:586px" width="13" height="13"><path d="M13 13H5L13 5z" fill="#fff"/><path d="M8 13L13 8" stroke="#000" stroke-width="1.500"/></svg>
<div class="a" style="left:1721px;top:586px;width:13px;height:13px;background:#a8a89c;"></div><svg style="left:1721px;top:586px" width="13" height="13"><path d="M13 13H5L13 5z" fill="#fff"/><path d="M8 13L13 8" stroke="#000" stroke-width="1.500"/></svg>
<div class="a" style="left:1735px;top:586px;width:13px;height:13px;background:#000000;"></div><div class="a" style="left:1749px;top:586px;width:13px;height:13px;background:#3c3c3b;"></div><div class="a" style="left:1763px;top:586px;width:13px;height:13px;background:#575756;"></div><div class="a" style="left:1777px;top:586px;width:13px;height:13px;background:#6f6f6e;"></div><div class="a" style="left:1791px;top:586px;width:13px;height:13px;background:#878787;"></div><div class="a" style="left:1805px;top:586px;width:13px;height:13px;background:#9d9d9c;"></div><div class="a" style="left:1819px;top:586px;width:13px;height:13px;background:#b2b2b2;"></div><div class="a" style="left:1833px;top:586px;width:13px;height:13px;background:#c6c6c6;"></div><div class="a" style="left:1847px;top:586px;width:13px;height:13px;background:#dadada;"></div><div class="a" style="left:1861px;top:586px;width:13px;height:13px;background:#ededed;"></div><div class="a" style="left:1875px;top:586px;width:13px;height:13px;background:#f8f8f8;"></div><div class="a" style="left:1665px;top:600px;width:13px;height:13px;background:#e2001a;"></div><div class="a" style="left:1679px;top:600px;width:13px;height:13px;background:#ea650d;"></div><div class="a" style="left:1693px;top:600px;width:13px;height:13px;background:#ffe600;"></div><div class="a" style="left:1707px;top:600px;width:13px;height:13px;background:#2e9a3a;"></div><div class="a" style="left:1721px;top:600px;width:13px;height:13px;background:#1d3a8f;"></div><div class="a" style="left:1735px;top:600px;width:13px;height:13px;background:#7b2d8e;"></div><div class="a" style="left:1902px;top:542px;width:11px;height:126px;background:#3e3e3e;border-left:1px solid #303030"></div><svg style="left:1904px;top:546px" width="8" height="6"><path d="M0 5.500h7.500L3.750 0z" fill="#9a9a9a"/></svg>
<svg style="left:1904px;top:657px" width="8" height="6"><path d="M0 0h7.500L3.750 5.500z" fill="#9a9a9a"/></svg>
<svg style="left:1666px;top:671px" width="20" height="16"><path d="M1.500 1v12M4.500 1v12M7.500 1v12" stroke="#d6d6d6" stroke-width="1.600"/><path d="M9.500 2l4 11" stroke="#d6d6d6" stroke-width="1.600"/><path d="M14 11h5l-2.500 3z" fill="#d6d6d6"/></svg>
<svg style="left:1696px;top:672px" width="12" height="13"><circle cx="3" cy="6.500" r="2" fill="none" stroke="#d6d6d6" stroke-width="1.300"/><circle cx="9" cy="2.500" r="1.800" fill="#d6d6d6"/><circle cx="9" cy="10.500" r="1.800" fill="#d6d6d6"/><path d="M4.500 5.500l3.500-2.500M4.500 7.500l3.500 2.500" stroke="#d6d6d6"/></svg>
<svg style="left:1773px;top:671px" width="20" height="16"><rect x="0" y="0" width="3" height="3" fill="#d6d6d6"/><rect x="0" y="4" width="3" height="3" fill="#d6d6d6"/><rect x="0" y="8" width="3" height="3" fill="#d6d6d6"/><rect x="4" y="0" width="3" height="3" fill="#d6d6d6"/><rect x="4" y="4" width="3" height="3" fill="#d6d6d6"/><rect x="4" y="8" width="3" height="3" fill="#d6d6d6"/><rect x="8" y="0" width="3" height="3" fill="#d6d6d6"/><rect x="8" y="4" width="3" height="3" fill="#d6d6d6"/><rect x="8" y="8" width="3" height="3" fill="#d6d6d6"/><path d="M13 10h5l-2.500 3z" fill="#d6d6d6"/></svg>
<svg style="left:1801px;top:673px" width="12" height="11"><rect x="0.500" y="0.500" width="10" height="9" fill="none" stroke="#6a6a6a"/><path d="M2 3h1M4 3h5M2 5h1M4 5h5M2 7h1M4 7h5" stroke="#6a6a6a"/></svg>
<svg style="left:1827px;top:672px" width="15" height="12"><path d="M0 2c0-1 .5-1.500 1.500-1.500H5l1.500 2H13c1 0 1.500.5 1.500 1.500v6c0 1-.5 1.500-1.500 1.500H1.500C.5 11.500 0 11 0 10z" fill="#d6d6d6"/></svg>
<svg style="left:1853px;top:672px" width="14" height="13"><path d="M2 1h11v11H5V5H2z" fill="#6a6a6a"/></svg>
<svg style="left:1880px;top:671px" width="13" height="14"><path d="M1 3h11M4.500 3V1h4v2" stroke="#6a6a6a" fill="none" stroke-width="1.200"/><path d="M2.500 4.500h8l-1 8.500h-6z" fill="none" stroke="#6a6a6a" stroke-width="1.100"/><path d="M5 6v5.500M8 6v5.500" stroke="#6a6a6a" stroke-width=".8"/></svg>
<svg style="left:1909px;top:680px" width="8" height="8"><path d="M7 1v1M5 3v1M7 3v1M3 5v1M5 5v1M7 5v1M1 7v1M3 7v1M5 7v1M7 7v1" stroke="#2e2e2e" stroke-width="1"/></svg>
<div class="a" style="left:1658px;top:692px;width:262px;height:183px;background:#4a4a4a;"></div><div class="a" style="left:1658px;top:692px;width:262px;height:16px;background:#323232;"></div><div class="a" style="left:1658px;top:692px;width:48px;height:17px;background:#4a4a4a;border-right:1px solid #2a2a2a;border-top:1px solid #5a5a5a"></div><svg style="left:1663px;top:696px" width="6" height="10"><path d="M0.500 3.500l2.500-2.500 2.500 2.500M0.500 6l2.500 2.500 2.500-2.500" fill="none" stroke="#d6d6d6" stroke-width="1.100"/></svg>
<div class="t" style="left:1671px;top:696px;font-size:10px;font-weight:bold;color:#e8e8e8;letter-spacing:-0.3px">Farbe</div><svg style="left:1902px;top:696px" width="15" height="9"><path d="M0 1.500h5l-2.500 3z" fill="#d6d6d6"/><path d="M6 1h8M6 3.500h8M6 6h8M6 8.500h8" stroke="#d6d6d6" stroke-width="1"/></svg>

<svg style="left:1663px;top:715px" width="13" height="13"><rect x="4.500" y="4.500" width="7" height="7" fill="#222" stroke="#eee"/><rect x="0.500" y="0.500" width="7" height="7" fill="#eee" stroke="#222"/></svg>
<svg style="left:1683px;top:714px" width="12" height="11"><path d="M1 2c4-1 7 1 7 5M8 9l-2.500-3M8 9l2.500-3M1 2l3 2M1 2l2.500-2" fill="none" stroke="#6a6a6a" stroke-width="1.200"/></svg>
<div class="a" style="left:1673px;top:743px;width:21px;height:20px;background:#4a4a4a;border:1px solid #2c2c2c"></div><div class="a" style="left:1678px;top:748px;width:11px;height:10px;background:#4a4a4a;border:1px solid #2c2c2c"></div><div class="a" style="left:1663px;top:732px;width:21px;height:21px;background:#4a4a4a;border:1px solid #2c2c2c"></div><div class="t" style="left:1669px;top:736px;font-size:12px;color:#e0e0e0">?</div><div class="t" style="left:1688px;top:744px;font-size:7px;color:#bbb">?</div><div class="t" style="left:1675px;top:755px;font-size:7px;color:#bbb">?</div><div class="t" style="left:1688px;top:755px;font-size:7px;color:#bbb">?</div><div class="t" style="left:1709px;top:722px;font-size:10px;font-weight:bold;color:#e0e0e0">C</div><div class="a" style="left:1728px;top:724px;width:103px;height:6px;background:#555;border:1px solid #2e2e2e;border-bottom-color:#666"></div><div class="a" style="left:1837px;top:718px;width:34px;height:18px;background:#a8a8a8;border:1px solid #3a3a3a"></div><div class="t" style="left:1874px;top:722px;font-size:10px;color:#e0e0e0">%</div><div class="t" style="left:1709px;top:747px;font-size:10px;font-weight:bold;color:#e0e0e0">M</div><div class="a" style="left:1728px;top:749px;width:103px;height:6px;background:#555;border:1px solid #2e2e2e;border-bottom-color:#666"></div><div class="a" style="left:1837px;top:743px;width:34px;height:18px;background:#a8a8a8;border:1px solid #3a3a3a"></div><div class="t" style="left:1874px;top:747px;font-size:10px;color:#e0e0e0">%</div><div class="t" style="left:1709px;top:772px;font-size:10px;font-weight:bold;color:#e0e0e0">Y</div><div class="a" style="left:1728px;top:774px;width:103px;height:6px;background:#555;border:1px solid #2e2e2e;border-bottom-color:#666"></div><div class="a" style="left:1837px;top:768px;width:34px;height:18px;background:#a8a8a8;border:1px solid #3a3a3a"></div><div class="t" style="left:1874px;top:772px;font-size:10px;color:#e0e0e0">%</div><div class="t" style="left:1709px;top:797px;font-size:10px;font-weight:bold;color:#e0e0e0">K</div><div class="a" style="left:1728px;top:799px;width:103px;height:6px;background:#555;border:1px solid #2e2e2e;border-bottom-color:#666"></div><div class="a" style="left:1837px;top:793px;width:34px;height:18px;background:#a8a8a8;border:1px solid #3a3a3a"></div><div class="t" style="left:1874px;top:797px;font-size:10px;color:#e0e0e0">%</div><svg style="left:1669px;top:800px" width="12" height="13"><path d="M2 11h9M2 11V6h3.500v5M3.800 6V2.500M1 5l2.800-3 2.800 3" fill="none" stroke="#d6d6d6" stroke-width="1.500"/></svg>
<div class="a" style="left:1688px;top:800px;width:14px;height:14px;background:#8a8a8a;border:1px solid #eee"></div><svg style="left:1663px;top:822px" width="13" height="13"><rect width="13" height="13" fill="#fff"/><path d="M0.500 12.500L12.500 0.500" stroke="#e0141e" stroke-width="2"/></svg>
<div class="a" style="left:1676px;top:822px;width:13px;height:13px;background:#000;"></div><div class="a" style="left:1689px;top:822px;width:13px;height:13px;background:#fff;"></div><div class="a" style="left:1664px;top:847px;width:238px;height:21px;background:linear-gradient(180deg,rgba(255,255,255,.75) 0%,rgba(255,255,255,0) 45%,rgba(0,0,0,0) 55%,rgba(0,0,0,.85) 100%),linear-gradient(90deg,#e01020 0%,#f0e000 14%,#20a030 32%,#20b0c0 48%,#40b0f0 55%,#2030a0 70%,#a020a0 84%,#e01060 100%);border:1px solid #2a2a2a"></div><svg style="left:1909px;top:866px" width="8" height="8"><path d="M7 1v1M5 3v1M7 3v1M3 5v1M5 5v1M7 5v1M1 7v1M3 7v1M5 7v1M7 7v1" stroke="#2e2e2e" stroke-width="1"/></svg>
<div class="a" style="left:1658px;top:879px;width:262px;height:141px;background:#4a4a4a;"></div><div class="a" style="left:1658px;top:879px;width:262px;height:16px;background:#323232;"></div><div class="a" style="left:1658px;top:879px;width:58px;height:17px;background:#4a4a4a;border-right:1px solid #2a2a2a;border-top:1px solid #5a5a5a"></div><div class="t" style="left:1664px;top:883px;font-size:10px;font-weight:bold;color:#e8e8e8;letter-spacing:-0.3px">Aussehen</div><svg style="left:1902px;top:883px" width="15" height="9"><path d="M0 1.500h5l-2.500 3z" fill="#d6d6d6"/><path d="M6 1h8M6 3.500h8M6 6h8M6 8.500h8" stroke="#d6d6d6" stroke-width="1"/></svg>

<div class="a" style="left:1663px;top:901px;width:251px;height:98px;background:#4a4a4a;border:1px solid #303030"></div><div class="a" style="left:1664px;top:926px;width:238px;height:1px;background:#353535;"></div><div class="a" style="left:1664px;top:951px;width:238px;height:1px;background:#353535;"></div><div class="a" style="left:1664px;top:976px;width:238px;height:1px;background:#353535;"></div><div class="a" style="left:1688px;top:951px;width:1px;height:47px;background:#353535;"></div><div class="a" style="left:1689px;top:977px;width:213px;height:21px;background:#585858;"></div><div class="t" style="left:1711px;top:909px;font-size:10px;font-weight:bold;color:#f0f0f0">Pfad</div><div class="t" style="left:1711px;top:934px;font-size:10px;font-style:italic;color:#e6e6e6">Gemischtes Aussehen</div><svg style="left:1670px;top:959px" width="14" height="10"><path d="M0.500 5C3 0 11 0 13.500 5 11 10 3 10 0.500 5z" fill="none" stroke="#d6d6d6" stroke-width="1.200"/><circle cx="7" cy="4.700" r="2.500" fill="#d6d6d6"/><circle cx="7" cy="4.700" r="1" fill="#444"/></svg>
<svg style="left:1670px;top:984px" width="14" height="10"><path d="M0.500 5C3 0 11 0 13.500 5 11 10 3 10 0.500 5z" fill="none" stroke="#5e5e5e" stroke-width="1.200"/><circle cx="7" cy="4.700" r="2.200" fill="#5e5e5e"/></svg>
<svg style="left:1693px;top:960px" width="9" height="8"><path d="M0 0h8.500L4.250 7z" fill="#d6d6d6"/></svg>
<div class="t" style="left:1711px;top:959px;font-size:10px;color:#e6e6e6">Fläche:</div><svg style="left:1789px;top:956px" width="17" height="17"><rect x="0.500" y="0.500" width="16" height="16" fill="#fff" stroke="#222"/><rect x="2.500" y="2.500" width="12" height="12" fill="#fff" stroke="#222"/><path d="M3.500 13.500L13.500 3.500" stroke="#d8203a" stroke-width="2"/></svg>
<div class="t" style="left:1732px;top:984px;font-size:10px;color:#e8903a"><span class="dotted">Deckkraft:</span></div><div class="t" style="left:1808px;top:984px;font-size:10px;color:#e6e6e6">Standard</div><div class="a" style="left:1902px;top:902px;width:11px;height:96px;background:#3e3e3e;border-left:1px solid #303030"></div><div class="a" style="left:1903px;top:918px;width:10px;height:50px;background:#6e6e6e;"></div><svg style="left:1904px;top:906px" width="8" height="6"><path d="M0 5.500h7.500L3.750 0z" fill="#d6d6d6"/></svg>
<svg style="left:1904px;top:989px" width="8" height="6"><path d="M0 0h7.500L3.750 5.500z" fill="#d6d6d6"/></svg>
<svg style="left:1668px;top:1003px" width="12" height="12"><rect x="1" y="1" width="9" height="9" fill="none" stroke="#6a6a6a" stroke-width="1.300"/></svg>
<svg style="left:1694px;top:1003px" width="12" height="12"><rect x="1" y="1" width="9" height="9" fill="none" stroke="#6a6a6a" stroke-width="1.300"/><rect x="3.500" y="3.500" width="4" height="4" fill="#6a6a6a"/></svg>
<div class="t" style="left:1718px;top:1001px;font-size:13px;font-style:italic;font-family:'Liberation Serif',serif;color:#e0e0e0">fx</div><svg style="left:1731px;top:1011px" width="5" height="4"><path d="M0 0h5l-2.500 3z" fill="#d6d6d6"/></svg>
<svg style="left:1828px;top:1003px" width="12" height="12"><circle cx="6" cy="6" r="4.700" fill="none" stroke="#d6d6d6" stroke-width="1.500"/><path d="M2.700 2.700l6.600 6.600" stroke="#d6d6d6" stroke-width="1.500"/></svg>
<svg style="left:1853px;top:1003px" width="14" height="13"><path d="M2 1h11v11H5V5H2z" fill="#6a6a6a"/></svg>
<svg style="left:1880px;top:1002px" width="13" height="14"><path d="M1 3h11M4.500 3V1h4v2" stroke="#6a6a6a" fill="none" stroke-width="1.200"/><path d="M2.500 4.500h8l-1 8.500h-6z" fill="none" stroke="#6a6a6a" stroke-width="1.100"/><path d="M5 6v5.500M8 6v5.500" stroke="#6a6a6a" stroke-width=".8"/></svg>
<div class="a" style="left:1658px;top:1022px;width:262px;height:16px;background:#323232;"></div><div class="a" style="left:1658px;top:1022px;width:56px;height:17px;background:#4a4a4a;border-right:1px solid #2a2a2a;border-top:1px solid #5a5a5a"></div><svg style="left:1663px;top:1026px" width="6" height="10"><path d="M0.500 3.500l2.500-2.500 2.500 2.500M0.500 6l2.500 2.500 2.500-2.500" fill="none" stroke="#d6d6d6" stroke-width="1.100"/></svg>
<div class="t" style="left:1671px;top:1026px;font-size:10px;font-weight:bold;color:#e8e8e8;letter-spacing:-0.3px">Zeichen</div><div class="a" style="left:1714px;top:1022px;width:46px;height:16px;background:#3a3a3a;border-right:1px solid #2a2a2a"></div><div class="t" style="left:1722px;top:1026px;font-size:10px;font-weight:bold;color:#8c8c8c;letter-spacing:-0.3px">Absatz</div><div class="a" style="left:1760px;top:1022px;width:62px;height:16px;background:#3a3a3a;border-right:1px solid #2a2a2a"></div><div class="t" style="left:1768px;top:1026px;font-size:10px;font-weight:bold;color:#8c8c8c;letter-spacing:-0.3px">OpenType</div><svg style="left:1902px;top:1026px" width="15" height="9"><path d="M0 1.500h5l-2.500 3z" fill="#d6d6d6"/><path d="M6 1h8M6 3.500h8M6 6h8M6 8.500h8" stroke="#d6d6d6" stroke-width="1"/></svg>

<div class="a" style="left:1658px;top:1038px;width:262px;height:1px;background:#4a4a4a;"></div><!--/RIGHTCOL-->
<!--/PANELS-->
<!--FLOAT-->
<div class="a" style="left:134px;top:752px;width:232px;height:242px;background:#4a4a4a;border:1px solid #262626;box-shadow:0 1px 3px rgba(0,0,0,.4)"></div><div class="a" style="left:135px;top:753px;width:230px;height:14px;background:#2c2c2c;"></div><svg style="left:337px;top:756px" width="9" height="7"><path d="M4 0v6L0 3zM9 0v6L5 3z" fill="#d6d6d6"/></svg>
<svg style="left:353px;top:756px" width="8" height="7"><path d="M1 0.500l6 6M7 0.500l-6 6" stroke="#d6d6d6" stroke-width="1.500"/></svg>
<div class="a" style="left:135px;top:767px;width:230px;height:16px;background:#323232;"></div><div class="a" style="left:135px;top:767px;width:91px;height:17px;background:#4a4a4a;border-right:1px solid #2a2a2a;border-top:1px solid #5a5a5a"></div><svg style="left:140px;top:771px" width="6" height="10"><path d="M0.500 3.500l2.500-2.500 2.500 2.500M0.500 6l2.500 2.500 2.500-2.500" fill="none" stroke="#d6d6d6" stroke-width="1.100"/></svg>
<div class="t" style="left:148px;top:771px;font-size:10px;font-weight:bold;color:#e8e8e8;letter-spacing:-0.3px">Transformieren</div><div class="a" style="left:226px;top:767px;width:65px;height:16px;background:#3a3a3a;border-right:1px solid #2a2a2a"></div><div class="t" style="left:234px;top:771px;font-size:10px;font-weight:bold;color:#8c8c8c;letter-spacing:-0.3px">Ausrichten</div><svg style="left:347px;top:771px" width="15" height="9"><path d="M0 1.500h5l-2.500 3z" fill="#d6d6d6"/><path d="M6 1h8M6 3.500h8M6 6h8M6 8.500h8" stroke="#d6d6d6" stroke-width="1"/></svg>

<svg style="left:139px;top:802px" width="21" height="21"><rect x="2.500" y="2.500" width="15" height="15" fill="none" stroke="#d6d6d6" stroke-dasharray="1 1"/><rect x="0.5" y="0.5" width="4" height="4" fill="#4a4a4a" stroke="#d6d6d6"/><rect x="0.5" y="8.0" width="4" height="4" fill="#4a4a4a" stroke="#d6d6d6"/><rect x="0.5" y="15.5" width="4" height="4" fill="#4a4a4a" stroke="#d6d6d6"/><rect x="8.0" y="0.5" width="4" height="4" fill="#d6d6d6" stroke="#d6d6d6"/><rect x="8.0" y="8.0" width="4" height="4" fill="#4a4a4a" stroke="#d6d6d6"/><rect x="8.0" y="15.5" width="4" height="4" fill="#4a4a4a" stroke="#d6d6d6"/><rect x="15.5" y="0.5" width="4" height="4" fill="#4a4a4a" stroke="#d6d6d6"/><rect x="15.5" y="8.0" width="4" height="4" fill="#4a4a4a" stroke="#d6d6d6"/><rect x="15.5" y="15.5" width="4" height="4" fill="#4a4a4a" stroke="#d6d6d6"/></svg>
<div class="t" style="left:173px;top:795px;font-size:10px;font-weight:bold;color:#dcdcdc">x:</div><div class="field" style="left:187px;top:790px;width:57px;height:18px;background:#a8a8a8;padding:4px 0 0 3px">27,5 mm</div><div class="t" style="left:251px;top:795px;font-size:10px;font-weight:bold;color:#dcdcdc">B:</div><div class="field" style="left:266px;top:790px;width:57px;height:18px;background:#a8a8a8;padding:4px 0 0 3px">37,599 mm</div><div class="t" style="left:173px;top:821px;font-size:10px;font-weight:bold;color:#dcdcdc">y:</div><div class="field" style="left:187px;top:816px;width:57px;height:18px;background:#a8a8a8;padding:4px 0 0 3px">67,558 mm</div><div class="t" style="left:251px;top:821px;font-size:10px;font-weight:bold;color:#dcdcdc">H:</div><div class="field" style="left:266px;top:816px;width:57px;height:18px;background:#a8a8a8;padding:4px 0 0 3px">13,072 mm</div><svg style="left:332px;top:804px" width="17" height="17"><rect x="5.500" y="1.500" width="6" height="6.500" rx="3" fill="none" stroke="#d6d6d6" stroke-width="1.500"/><rect x="5.500" y="9" width="6" height="6.500" rx="3" fill="none" stroke="#d6d6d6" stroke-width="1.500"/><path d="M0 8.500h3M14 8.500h3M1.500 4.500l2 1.500M1.500 12.500l2-1.500M15.500 4.500l-2 1.500M15.500 12.500l-2-1.500" stroke="#d6d6d6"/></svg>
<svg style="left:168px;top:847px" width="14" height="11"><path d="M0.500 10.500h10M0.500 10.500L8 1.500" fill="none" stroke="#d6d6d6" stroke-width="1.100"/><path d="M12.500 5v1.500M12.500 9v1.500" stroke="#d6d6d6" stroke-width="1.300"/></svg>
<div class="field" style="left:187px;top:842px;width:40px;height:19px;background:#a8a8a8;padding:4px 0 0 3px">0°</div><div class="a" style="left:226px;top:842px;width:17px;height:19px;background:#5c5c5c;border:1px solid #2e2e2e"></div><svg style="left:231px;top:850px" width="8" height="5"><path d="M0 0h7l-3.500 4z" fill="#d6d6d6"/></svg>
<svg style="left:249px;top:847px" width="15" height="11"><path d="M0.500 10.500l4-9h6l-4 9z" fill="none" stroke="#d6d6d6" stroke-width="1.100"/><path d="M13.500 5v1.500M13.500 9v1.500" stroke="#d6d6d6" stroke-width="1.300"/></svg>
<div class="field" style="left:268px;top:842px;width:39px;height:19px;background:#a8a8a8;padding:4px 0 0 3px">0°</div><div class="a" style="left:306px;top:842px;width:17px;height:19px;background:#5c5c5c;border:1px solid #2e2e2e"></div><svg style="left:311px;top:850px" width="8" height="5"><path d="M0 0h7l-3.500 4z" fill="#d6d6d6"/></svg>
<div class="a" style="left:135px;top:869px;width:230px;height:1px;background:#2a2a2a;"></div><div class="a" style="left:135px;top:870px;width:230px;height:16px;background:#323232;"></div><div class="a" style="left:135px;top:870px;width:64px;height:17px;background:#4a4a4a;border-right:1px solid #2a2a2a;border-top:1px solid #5a5a5a"></div><div class="t" style="left:141px;top:874px;font-size:10px;font-weight:bold;color:#e8e8e8;letter-spacing:-0.3px">Pathfinder</div><svg style="left:347px;top:874px" width="15" height="9"><path d="M0 1.500h5l-2.500 3z" fill="#d6d6d6"/><path d="M6 1h8M6 3.500h8M6 6h8M6 8.500h8" stroke="#d6d6d6" stroke-width="1"/></svg>

<div class="t" style="left:140px;top:895px;font-size:10px;color:#e0e0e0">Formmodi:</div><svg style="left:146px;top:917px" width="15" height="15"><rect x="0.500" y="0.500" width="9" height="9" fill="#8d8d8d" stroke="#d6d6d6"/><rect x="4.500" y="4.500" width="9" height="9" fill="#8d8d8d" stroke="#d6d6d6"/><rect x="1" y="1" width="8" height="8" fill="#8d8d8d"/></svg>
<svg style="left:177px;top:917px" width="15" height="15"><rect x="4.500" y="4.500" width="9" height="9" fill="#4a4a4a" stroke="#777"/><path d="M0.500 0.500h9v4h-5v5h-4z" fill="#8d8d8d" stroke="#d6d6d6"/></svg>
<svg style="left:209px;top:917px" width="15" height="15"><rect x="0.500" y="0.500" width="9" height="9" fill="none" stroke="#d6d6d6"/><rect x="4.500" y="4.500" width="9" height="9" fill="none" stroke="#d6d6d6"/><rect x="5" y="5" width="4.500" height="4.500" fill="#8d8d8d"/></svg>
<svg style="left:243px;top:917px" width="15" height="15"><rect x="0.500" y="0.500" width="9" height="9" fill="#8d8d8d" stroke="#d6d6d6"/><rect x="4.500" y="4.500" width="9" height="9" fill="#8d8d8d" stroke="#d6d6d6"/><rect x="5" y="5" width="4" height="4" fill="#4a4a4a"/></svg>
<div class="a" style="left:271px;top:915px;width:88px;height:19px;background:#505050;border:1px solid #3a3a3a"></div><div class="t" style="left:288px;top:920px;font-size:10px;color:#7a7a7a">Umwandeln</div><div class="t" style="left:140px;top:945px;font-size:10px;color:#e0e0e0">Pathfinder:</div><svg style="left:148px;top:967px" width="16" height="16"><rect x="0.500" y="0.500" width="6" height="6" fill="#8d8d8d" stroke="#d6d6d6"/><rect x="4.500" y="4.500" width="6" height="6" fill="#4a4a4a" stroke="#d6d6d6"/><rect x="8.500" y="8.500" width="6" height="6" fill="#8d8d8d" stroke="#d6d6d6"/></svg>
<svg style="left:185px;top:967px" width="16" height="16"><rect x="3" y="0" width="7" height="7" fill="#d6d6d6"/><rect x="0" y="4" width="7" height="7" fill="#d6d6d6"/><rect x="7" y="7" width="8" height="8" fill="#8d8d8d" stroke="#d6d6d6"/></svg>
<svg style="left:222px;top:967px" width="16" height="16"><rect x="0" y="0" width="10" height="10" fill="#d6d6d6"/><rect x="5.500" y="5.500" width="9" height="9" fill="#8d8d8d" stroke="#d6d6d6"/></svg>
<svg style="left:259px;top:967px" width="16" height="16"><rect x="1" y="2" width="13" height="12" fill="#5e5e5e"/><rect x="5" y="5" width="6" height="6" fill="#d6d6d6"/></svg>
<svg style="left:297px;top:967px" width="16" height="16"><rect x="0.500" y="0.500" width="9" height="9" fill="none" stroke="#d6d6d6"/><rect x="5.500" y="5.500" width="9" height="9" fill="none" stroke="#d6d6d6"/><rect x="5.500" y="5.500" width="4" height="4" fill="none" stroke="#d6d6d6"/></svg>
<svg style="left:335px;top:967px" width="16" height="16"><rect x="0.500" y="0.500" width="10" height="10" fill="#5a5a5a" stroke="#888"/><path d="M11 4h3.500v10.500H4V11h7z" fill="#8d8d8d" stroke="#d6d6d6"/></svg>
<!--/FLOAT-->
</body>
</html>
